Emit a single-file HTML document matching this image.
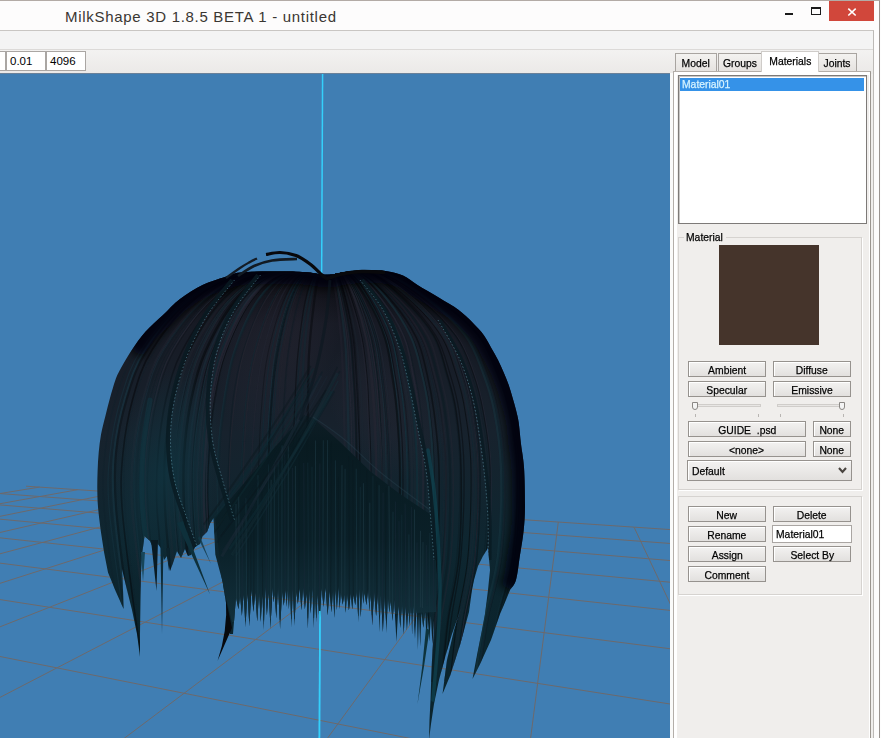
<!DOCTYPE html>
<html><head><meta charset="utf-8"><title>MilkShape 3D 1.8.5 BETA 1 - untitled</title>
<style>
html,body{margin:0;padding:0;}
body{width:881px;height:738px;overflow:hidden;background:#fdfdfd;position:relative;font-family:"Liberation Sans",sans-serif;font-size:12px;color:#000;}
.abs{position:absolute;}
#frame{left:0;top:0;width:880px;height:738px;border-top:1px solid #b3aba6;border-right:1px solid #9a9490;box-sizing:border-box;background:#fdfcfc;}
#title{left:65px;top:7px;font-size:15px;letter-spacing:0.7px;color:#3a3632;white-space:nowrap;line-height:20px;}
#close{left:829px;top:1px;width:45px;height:20px;background:#d1473b;}
#client{left:0;top:30px;width:874px;height:708px;background:#f0eeec;border-top:1px solid #c9c6c3;border-right:1px solid #bdbab7;box-sizing:border-box;}
#menubar{left:0;top:31px;width:873px;height:18px;background:#f4f4f4;border-bottom:1px solid #dcdad8;}
#toolbar{left:0;top:50px;width:873px;height:24px;background:linear-gradient(#f3f2f1,#ebe9e7);}
.tb{top:51px;height:20px;background:#fff;border:1px solid #aaa6a3;box-sizing:border-box;font-size:11.5px;line-height:18px;padding-left:3px;}
#viewport{left:0;top:74px;width:670px;height:664px;overflow:hidden;}
#vtop{left:0;top:73px;width:670px;height:1px;background:#6a8199;}
.btn{height:16px;box-sizing:border-box;border:1px solid #96928e;background:linear-gradient(#f3f2f1,#e2e0de);text-align:center;font-size:11.5px;line-height:16px;white-space:nowrap;box-shadow:inset 1px 1px 0 #fff;}
.tab{top:53px;height:18px;box-sizing:border-box;border:1px solid #a8a4a0;border-bottom:none;background:linear-gradient(#f3f2f0,#e6e3e0);text-align:center;font-size:11.5px;line-height:18px;}
.t,.tl{-webkit-text-stroke:0.25px currentColor;}
.t{display:inline-block;position:relative;top:-0.5px;transform:scaleX(.9);transform-origin:50% 50%;}
.tl{display:inline-block;transform:scaleX(.9);transform-origin:0 50%;}
.grp{border:1px solid #d6d3d0;box-sizing:border-box;box-shadow:1px 1px 0 #fff;}
</style></head><body>
<div class="abs" id="frame"></div>
<div class="abs" id="title">MilkShape 3D 1.8.5 BETA 1 - untitled</div>
<div class="abs" style="left:785px;top:13px;width:8px;height:2px;background:#1a1a1a"></div>
<div class="abs" style="left:811px;top:7px;width:10px;height:8px;border:1px solid #1a1a1a;border-top-width:2px;box-sizing:border-box"></div>
<div class="abs" id="close"><svg width="45" height="20" viewBox="0 0 45 20"><path d="M19.3,7.7 L26.7,14.5 M26.7,7.7 L19.3,14.5" stroke="#fff" stroke-width="1.6" fill="none"/></svg></div>
<div class="abs" id="client"></div>
<div class="abs" id="menubar"></div>
<div class="abs" id="toolbar"></div>
<div class="abs tb" style="left:-3px;width:9px"></div>
<div class="abs tb" style="left:6px;width:40px">0.01</div>
<div class="abs tb" style="left:46px;width:40px">4096</div>
<div class="abs" id="vtop"></div>
<div class="abs" id="viewport"><svg id="vp" width="670" height="664" viewBox="0 0 670 664">
<defs>
<linearGradient id="hg" gradientUnits="userSpaceOnUse" x1="0" y1="195" x2="0" y2="560"><stop offset="0" stop-color="#09090d"/><stop offset="0.15" stop-color="#171a24"/><stop offset="0.45" stop-color="#17222d"/><stop offset="0.75" stop-color="#0e2630"/><stop offset="1" stop-color="#0b242d"/></linearGradient>
<radialGradient id="rim" gradientUnits="userSpaceOnUse" cx="310" cy="420" r="235"><stop offset="0.72" stop-color="#05070a" stop-opacity="0"/><stop offset="0.95" stop-color="#05070a" stop-opacity="0.85"/></radialGradient>
<radialGradient id="sh"><stop offset="0" stop-color="#23232e" stop-opacity="0.6"/><stop offset="1" stop-color="#2e2b3a" stop-opacity="0"/></radialGradient>
<radialGradient id="tl"><stop offset="0" stop-color="#0f3440" stop-opacity="0.8"/><stop offset="1" stop-color="#0f3440" stop-opacity="0"/></radialGradient>
<linearGradient id="bg2" gradientUnits="userSpaceOnUse" x1="0" y1="340" x2="0" y2="550"><stop offset="0" stop-color="#081a20" stop-opacity="0.55"/><stop offset="0.15" stop-color="#081a20" stop-opacity="0.95"/><stop offset="0.6" stop-color="#0a1f27"/><stop offset="1" stop-color="#12303c"/></linearGradient>
<filter id="bl" x="-20%" y="-20%" width="140%" height="140%"><feGaussianBlur stdDeviation="5"/></filter>
<clipPath id="bc"><path d="M101,458.5 C100.5,454.2 98.6,440.2 98,433 C97.4,425.8 97.4,421 97.3,415 C97.2,409 97.4,403.1 97.6,397 C97.8,390.9 98.1,384.7 98.7,378.6 C99.3,372.5 99.9,366.6 101,360.5 C102.1,354.4 103.9,348.1 105.4,342 C106.9,335.9 108.3,330 110,324 C111.7,318 113.6,311 115.4,306 C117.2,301 118.3,299 121,294 C123.7,289 127.7,282.1 131.8,276 C135.9,269.9 140.2,263.5 145.4,257.7 C150.6,251.9 157.2,246.4 163,241 C168.8,235.6 173.4,230 180,225 C186.6,220 195,214.7 202.5,211 C210,207.3 218.8,205.1 225,203 C231.2,200.9 232.5,199.4 240,198.5 C247.5,197.6 259.2,197.6 270,197.5 C280.8,197.4 296.3,197.5 305,198 C313.7,198.5 317.5,200.1 322,200.5 C326.5,200.9 328.2,200.9 332,200.5 C335.8,200.1 340,198.7 345,198 C350,197.3 355.3,196.7 362,196.5 C368.7,196.3 378.2,196.2 385,197 C391.8,197.8 397.6,199.2 403,201.5 C408.4,203.8 411.6,207.3 417.5,211 C423.4,214.7 431.8,219.3 438.7,223.5 C445.6,227.7 453.1,231.8 458.7,236 C464.3,240.2 468.3,244.3 472.5,248.5 C476.7,252.7 480.6,256.8 483.7,261 C486.8,265.2 488.6,269.3 491,273.5 C493.4,277.7 495.9,281.8 498,286 C500.1,290.2 501.9,294.3 503.7,298.5 C505.5,302.7 507.2,306.8 508.7,311 C510.2,315.2 511.3,319.3 512.5,323.5 C513.7,327.7 515,331.8 516,336 C517,340.2 517.9,342.8 518.7,348.5 C519.5,354.2 520.1,362.5 521,370 C521.9,377.5 523.3,383.3 524,393.5 C524.7,403.7 525,420.6 525,431 C525,441.4 524.5,447.7 523.7,456 C522.9,464.3 521.3,472.7 520,481 C518.7,489.3 517.7,500.2 516,506 C514.3,511.8 511,514.3 510,516 L506,526 L500,540 L491,566 L481,588 L472.5,605 L477,581 L482,556 L485,540 L488,516 L490,496 L488,474 L483,482 L478,492 L474,506 L472,516 L469,538 L460,571 L450,602 L442.5,620 L447,586 L454,556 L461,534 L459,540 L452,560 L446,580 L439,606 L434,630 L431,650 L429,666 L429.5,646 L430.5,626 L431.5,596 L432.5,576 L434,556 L434,546.3 L432.4,570.6 L430.9,542.3 L429.3,567.8 L427.8,541.3 L426.5,566.6 L425.2,537.6 L423.3,553.8 L421.4,539.1 L420.2,572.3 L419,540.3 L417.9,576.1 L416.7,532.9 L415,564.9 L413.2,530.6 L412.1,561 L411,529.5 L409.7,552 L408.4,534.9 L406.9,556.5 L405.3,530.8 L403.7,560.8 L402.1,527.7 L400.3,554.3 L398.5,530.7 L396.4,567.9 L394.3,524.1 L392.5,547.1 L390.7,526.8 L389.3,538.7 L387.9,522.6 L386.4,559.2 L384.9,518.3 L382.9,558 L380.8,520.3 L379.5,558 L378.2,516 L376.1,542.6 L374,515.9 L372.3,551.5 L370.6,520 L369.4,537.6 L368.2,514 L366.4,531.3 L364.5,518.4 L363.3,529.7 L362.1,515.6 L360.8,543.7 L359.5,513 L358.3,548.5 L357,515.4 L355.2,531.3 L353.5,519.8 L352.2,535.6 L350.8,519.1 L348.9,536.5 L347,518.8 L345.7,539 L344.4,519.9 L342.7,530.8 L340.9,518.2 L339.6,535.2 L338.3,512.6 L336.9,536.3 L335.5,513.9 L334.3,544.3 L333.1,515.6 L331.4,538.4 L329.7,516.6 L327.6,541.5 L325.5,513.2 L323.6,533.1 L321.6,514 L319.6,550.9 L317.6,519.5 L316.3,548.7 L315,519.1 L313.7,554.6 L312.4,512.8 L310.7,539.8 L309,513.9 L307.9,555 L306.7,518.6 L304.9,535.2 L303.1,513.4 L301.4,536.2 L299.7,513.8 L297.9,529.9 L296.1,516.9 L294.4,551.9 L292.8,513.6 L291.4,553.7 L290,515.6 L288.9,535.5 L287.8,515 L286.6,532.9 L285.5,514.9 L283.8,531.7 L282.1,517.3 L280.1,555.5 L278.1,513.1 L276.3,544.4 L274.6,519.3 L273.4,528.5 L272.3,512.2 L270.5,555 L268.7,517.8 L266.9,541.5 L265.2,512.6 L263.8,556 L262.4,519.2 L260.7,548.6 L259.1,518.3 L257.2,547.7 L255.4,517.5 L253.4,537.9 L251.4,515.3 L249.4,552.4 L247.4,517.9 L245.5,553.5 L243.6,519.9 L241.9,541.9 L240.1,522 L238.4,535.2 L236,523 L233,560 L230,560 L227,535 L222.6,507.7 L215.3,480.5 L213.5,444 L210,449.6 L207,458 L202.6,462 L200,470 L195,473 L191,481 L188,482 L185,475 L181,484 L177,477 L173,489 L170,497 L167,482 L164,486 L161,474 L157,469 L154,476 L150,467 L144.5,462 L142,481 L141,498.6 L140.5,526 L140,560 L140,583 L137,560 L132,536 L127,516 L122,495 L123,516 L123.6,535 L116,518 L108,498.6 L104,478Z"/></clipPath>
</defs>
<rect width="670" height="664" fill="#407eb3"/>
<g stroke="#7e6150" stroke-width="1" fill="none" opacity="0.72"><line x1="-5.0" y1="581.5" x2="672.0" y2="716.7"/><line x1="-5.0" y1="524.8" x2="672.0" y2="630.3"/><line x1="-5.0" y1="488.5" x2="672.0" y2="575.0"/><line x1="-5.0" y1="463.3" x2="672.0" y2="536.6"/><line x1="-5.0" y1="444.7" x2="672.0" y2="508.4"/><line x1="-5.0" y1="430.5" x2="672.0" y2="486.7"/><line x1="-5.0" y1="419.2" x2="672.0" y2="469.6"/><line x1="26.0" y1="412.2" x2="672.0" y2="455.7"/><line x1="634.0" y1="453.1" x2="749.6" y2="697.8"/><line x1="558.3" y1="448.0" x2="526.3" y2="697.8"/><line x1="488.5" y1="443.3" x2="303.0" y2="697.8"/><line x1="423.8" y1="439.0" x2="79.7" y2="697.8"/><line x1="363.7" y1="434.9" x2="-143.6" y2="697.8"/><line x1="307.8" y1="431.2" x2="-366.9" y2="697.8"/><line x1="255.6" y1="427.7" x2="-590.2" y2="697.8"/><line x1="206.8" y1="424.4" x2="-813.5" y2="697.8"/><line x1="161.1" y1="421.3" x2="-1036.8" y2="697.8"/><line x1="118.1" y1="418.4" x2="-1260.1" y2="697.8"/><line x1="77.7" y1="415.7" x2="-1483.4" y2="697.8"/><line x1="39.5" y1="413.1" x2="-1706.7" y2="697.8"/></g>
<line x1="322.6" y1="0" x2="319.4" y2="664" stroke="#34d0fb" stroke-width="1.5"/>
<path d="M101,458.5 C100.5,454.2 98.6,440.2 98,433 C97.4,425.8 97.4,421 97.3,415 C97.2,409 97.4,403.1 97.6,397 C97.8,390.9 98.1,384.7 98.7,378.6 C99.3,372.5 99.9,366.6 101,360.5 C102.1,354.4 103.9,348.1 105.4,342 C106.9,335.9 108.3,330 110,324 C111.7,318 113.6,311 115.4,306 C117.2,301 118.3,299 121,294 C123.7,289 127.7,282.1 131.8,276 C135.9,269.9 140.2,263.5 145.4,257.7 C150.6,251.9 157.2,246.4 163,241 C168.8,235.6 173.4,230 180,225 C186.6,220 195,214.7 202.5,211 C210,207.3 218.8,205.1 225,203 C231.2,200.9 232.5,199.4 240,198.5 C247.5,197.6 259.2,197.6 270,197.5 C280.8,197.4 296.3,197.5 305,198 C313.7,198.5 317.5,200.1 322,200.5 C326.5,200.9 328.2,200.9 332,200.5 C335.8,200.1 340,198.7 345,198 C350,197.3 355.3,196.7 362,196.5 C368.7,196.3 378.2,196.2 385,197 C391.8,197.8 397.6,199.2 403,201.5 C408.4,203.8 411.6,207.3 417.5,211 C423.4,214.7 431.8,219.3 438.7,223.5 C445.6,227.7 453.1,231.8 458.7,236 C464.3,240.2 468.3,244.3 472.5,248.5 C476.7,252.7 480.6,256.8 483.7,261 C486.8,265.2 488.6,269.3 491,273.5 C493.4,277.7 495.9,281.8 498,286 C500.1,290.2 501.9,294.3 503.7,298.5 C505.5,302.7 507.2,306.8 508.7,311 C510.2,315.2 511.3,319.3 512.5,323.5 C513.7,327.7 515,331.8 516,336 C517,340.2 517.9,342.8 518.7,348.5 C519.5,354.2 520.1,362.5 521,370 C521.9,377.5 523.3,383.3 524,393.5 C524.7,403.7 525,420.6 525,431 C525,441.4 524.5,447.7 523.7,456 C522.9,464.3 521.3,472.7 520,481 C518.7,489.3 517.7,500.2 516,506 C514.3,511.8 511,514.3 510,516 L506,526 L500,540 L491,566 L481,588 L472.5,605 L477,581 L482,556 L485,540 L488,516 L490,496 L488,474 L483,482 L478,492 L474,506 L472,516 L469,538 L460,571 L450,602 L442.5,620 L447,586 L454,556 L461,534 L459,540 L452,560 L446,580 L439,606 L434,630 L431,650 L429,666 L429.5,646 L430.5,626 L431.5,596 L432.5,576 L434,556 L434,546.3 L432.4,570.6 L430.9,542.3 L429.3,567.8 L427.8,541.3 L426.5,566.6 L425.2,537.6 L423.3,553.8 L421.4,539.1 L420.2,572.3 L419,540.3 L417.9,576.1 L416.7,532.9 L415,564.9 L413.2,530.6 L412.1,561 L411,529.5 L409.7,552 L408.4,534.9 L406.9,556.5 L405.3,530.8 L403.7,560.8 L402.1,527.7 L400.3,554.3 L398.5,530.7 L396.4,567.9 L394.3,524.1 L392.5,547.1 L390.7,526.8 L389.3,538.7 L387.9,522.6 L386.4,559.2 L384.9,518.3 L382.9,558 L380.8,520.3 L379.5,558 L378.2,516 L376.1,542.6 L374,515.9 L372.3,551.5 L370.6,520 L369.4,537.6 L368.2,514 L366.4,531.3 L364.5,518.4 L363.3,529.7 L362.1,515.6 L360.8,543.7 L359.5,513 L358.3,548.5 L357,515.4 L355.2,531.3 L353.5,519.8 L352.2,535.6 L350.8,519.1 L348.9,536.5 L347,518.8 L345.7,539 L344.4,519.9 L342.7,530.8 L340.9,518.2 L339.6,535.2 L338.3,512.6 L336.9,536.3 L335.5,513.9 L334.3,544.3 L333.1,515.6 L331.4,538.4 L329.7,516.6 L327.6,541.5 L325.5,513.2 L323.6,533.1 L321.6,514 L319.6,550.9 L317.6,519.5 L316.3,548.7 L315,519.1 L313.7,554.6 L312.4,512.8 L310.7,539.8 L309,513.9 L307.9,555 L306.7,518.6 L304.9,535.2 L303.1,513.4 L301.4,536.2 L299.7,513.8 L297.9,529.9 L296.1,516.9 L294.4,551.9 L292.8,513.6 L291.4,553.7 L290,515.6 L288.9,535.5 L287.8,515 L286.6,532.9 L285.5,514.9 L283.8,531.7 L282.1,517.3 L280.1,555.5 L278.1,513.1 L276.3,544.4 L274.6,519.3 L273.4,528.5 L272.3,512.2 L270.5,555 L268.7,517.8 L266.9,541.5 L265.2,512.6 L263.8,556 L262.4,519.2 L260.7,548.6 L259.1,518.3 L257.2,547.7 L255.4,517.5 L253.4,537.9 L251.4,515.3 L249.4,552.4 L247.4,517.9 L245.5,553.5 L243.6,519.9 L241.9,541.9 L240.1,522 L238.4,535.2 L236,523 L233,560 L230,560 L227,535 L222.6,507.7 L215.3,480.5 L213.5,444 L210,449.6 L207,458 L202.6,462 L200,470 L195,473 L191,481 L188,482 L185,475 L181,484 L177,477 L173,489 L170,497 L167,482 L164,486 L161,474 L157,469 L154,476 L150,467 L144.5,462 L142,481 L141,498.6 L140.5,526 L140,560 L140,583 L137,560 L132,536 L127,516 L122,495 L123,516 L123.6,535 L116,518 L108,498.6 L104,478Z" fill="url(#hg)"/>
<g clip-path="url(#bc)">
<ellipse cx="280" cy="275" rx="55" ry="95" fill="url(#sh)" transform="rotate(20 280 275)"/>
<ellipse cx="385" cy="335" rx="50" ry="75" fill="url(#sh)" transform="rotate(-35 385 335)" opacity="0.8"/>
<g fill="none"><path d="M327,202 C326.2,201.8 336.2,201.5 322,201 C307.8,200.5 265,195 242,199 C219,203 201.5,212.2 184,225 C166.5,237.8 148.3,259.5 137,276 C125.7,292.5 121.3,306.8 116,324 C110.7,341.2 107,360.8 105,379 C103,397.2 102.2,408.5 104,433 C105.8,457.5 112.5,500.5 116,526 C119.5,551.5 123.5,576 125,586" stroke="#10222c" stroke-width="1.2" opacity="0.39"/><path d="M327,203 C326.3,202.8 333.8,202.5 323,202 C312.2,201.5 279.5,196 262,200 C244.5,204 231.3,213.2 218,226 C204.7,238.8 190.7,260.5 182,277 C173.3,293.5 170,307.8 166,325 C162,342.2 159.5,361.8 158,380 C156.5,398.2 155.7,409.5 157,434 C158.3,458.5 163.2,501.5 166,527 C168.8,552.5 172.7,577 174,587" stroke="#06080b" stroke-width="1.6" opacity="0.41"/><path d="M327,204 C326.5,203.7 332.2,202.7 324,202 C315.8,201.3 291.3,195.8 278,200 C264.7,204.2 254.3,214 244,227 C233.7,240 222.7,261.5 216,278 C209.3,294.5 207,309 204,326 C201,343 199.2,361.8 198,380 C196.8,398.2 196,410.3 197,435 C198,459.7 201.8,502.5 204,528 C206.2,553.5 209,578 210,588" stroke="#173642" stroke-width="2.2" opacity="0.26"/><path d="M327,204 C326.5,203.7 333,202.7 324,202 C315,201.3 287.7,195.8 273,200 C258.3,204.2 247.2,214 236,227 C224.8,240 213.3,261.5 206,278 C198.7,294.5 195.5,309 192,326 C188.5,343 186.2,361.8 185,380 C183.8,398.2 183.8,410.3 185,435 C186.2,459.7 189.8,502.5 192,528 C194.2,553.5 197,578 198,588" stroke="#06080b" stroke-width="0.8" opacity="0.33"/><path d="M327,203 C326.3,202.8 333.3,202.5 323,202 C312.7,201.5 281.7,196 265,200 C248.3,204 235.7,213.2 223,226 C210.3,238.8 197.3,260.5 189,277 C180.7,293.5 177,307.8 173,325 C169,342.2 166.3,361.8 165,380 C163.7,398.2 163.7,409.5 165,434 C166.3,458.5 170.5,501.5 173,527 C175.5,552.5 178.8,577 180,587" stroke="#06080b" stroke-width="2.2" opacity="0.48"/><path d="M327,204 C326.5,203.7 331.5,202.7 324,202 C316.5,201.3 294.2,195.8 282,200 C269.8,204.2 260.3,214 251,227 C241.7,240 232,261.5 226,278 C220,294.5 217.8,308.8 215,326 C212.2,343.2 210.2,362.8 209,381 C207.8,399.2 207,410.5 208,435 C209,459.5 213,502.5 215,528 C217,553.5 219.2,578 220,588" stroke="#070a0e" stroke-width="1.2" opacity="0.36"/><path d="M327,203 C326.5,202.8 334,202.5 324,202 C314,201.5 283.3,196 267,200 C250.7,204 238.5,213.2 226,226 C213.5,238.8 200.2,260.5 192,277 C183.8,293.5 180.8,307.8 177,325 C173.2,342.2 170.3,361.8 169,380 C167.7,398.2 167.7,409.5 169,434 C170.3,458.5 174.5,501.5 177,527 C179.5,552.5 182.8,577 184,587" stroke="#262632" stroke-width="2.2" opacity="0.31"/><path d="M327,202 C326.3,201.8 336,201.5 323,201 C310,200.5 270.3,195 249,199 C227.7,203 211.2,212.2 195,225 C178.8,237.8 162.3,259.5 152,276 C141.7,292.5 137.8,306.8 133,324 C128.2,341.2 124.8,360.8 123,379 C121.2,397.2 120.3,408.5 122,433 C123.7,457.5 129.7,500.5 133,526 C136.3,551.5 140.5,576 142,586" stroke="#06080b" stroke-width="1.6" opacity="0.56"/><path d="M327,205 C326.7,204.7 330.5,203.7 325,203 C319.5,202.3 302.8,196.8 294,201 C285.2,205.2 278.7,215 272,228 C265.3,241 258.3,262.5 254,279 C249.7,295.5 248,310 246,327 C244,344 242.8,362.8 242,381 C241.2,399.2 240.3,411.3 241,436 C241.7,460.7 244.5,503.5 246,529 C247.5,554.5 249.3,579 250,589" stroke="#0e2c37" stroke-width="1" opacity="0.47"/><path d="M327,203 C326.3,202.7 334.7,201.7 323,201 C311.3,200.3 276,194.8 257,199 C238,203.2 223.5,213 209,226 C194.5,239 179.3,260.5 170,277 C160.7,293.5 157.3,308 153,325 C148.7,342 145.7,360.8 144,379 C142.3,397.2 141.5,409.3 143,434 C144.5,458.7 150,501.5 153,527 C156,552.5 159.7,577 161,587" stroke="#262632" stroke-width="1" opacity="0.38"/><path d="M327,204 C326.5,203.7 332.8,202.7 324,202 C315.2,201.3 288.3,195.8 274,200 C259.7,204.2 248.8,214 238,227 C227.2,240 216,261.5 209,278 C202,294.5 199.3,309 196,326 C192.7,343 190.2,361.8 189,380 C187.8,398.2 187.8,410.3 189,435 C190.2,459.7 193.8,502.5 196,528 C198.2,553.5 201,578 202,588" stroke="#2b2a39" stroke-width="1" opacity="0.30"/><path d="M327,204 C326.5,203.7 331.7,202.7 324,202 C316.3,201.3 293.3,195.8 281,200 C268.7,204.2 259.5,214 250,227 C240.5,240 230.2,261.5 224,278 C217.8,294.5 215.8,309 213,326 C210.2,343 208.2,361.8 207,380 C205.8,398.2 205,410.3 206,435 C207,459.7 211,502.5 213,528 C215,553.5 217.2,578 218,588" stroke="#070a0e" stroke-width="0.8" opacity="0.58"/><path d="M327,205 C326.7,204.7 329.8,203.7 325,203 C320.2,202.3 305.7,196.8 298,201 C290.3,205.2 284.8,215 279,228 C273.2,241 266.8,262.5 263,279 C259.2,295.5 257.8,310 256,327 C254.2,344 252.7,362.8 252,381 C251.3,399.2 251.3,411.3 252,436 C252.7,460.7 254.8,503.5 256,529 C257.2,554.5 258.5,579 259,589" stroke="#1c2833" stroke-width="0.8" opacity="0.41"/><path d="M327,205 C326.7,204.7 329.8,203.7 325,203 C320.2,202.3 305.7,196.8 298,201 C290.3,205.2 284.8,215 279,228 C273.2,241 266.8,262.5 263,279 C259.2,295.5 257.8,310 256,327 C254.2,344 252.7,362.8 252,381 C251.3,399.2 251.3,411.3 252,436 C252.7,460.7 254.8,503.5 256,529 C257.2,554.5 258.5,579 259,589" stroke="#262632" stroke-width="1.6" opacity="0.38"/><path d="M327,204 C326.5,203.7 332,202.7 324,202 C316,201.3 292,195.8 279,200 C266,204.2 255.8,214 246,227 C236.2,240 226.3,261.5 220,278 C213.7,294.5 211,309 208,326 C205,343 203,361.8 202,380 C201,398.2 201,410.3 202,435 C203,459.7 206,502.5 208,528 C210,553.5 213,578 214,588" stroke="#2b2a39" stroke-width="2.2" opacity="0.41"/><path d="M327,205 C326.8,204.8 328.2,204.5 326,204 C323.8,203.5 317.5,198 314,202 C310.5,206 307.7,215.2 305,228 C302.3,240.8 299.7,262.5 298,279 C296.3,295.5 295.8,309.8 295,327 C294.2,344.2 293.3,363.8 293,382 C292.7,400.2 292.7,411.5 293,436 C293.3,460.5 294.3,503.5 295,529 C295.7,554.5 296.7,579 297,589" stroke="#070a0e" stroke-width="1.2" opacity="0.56"/><path d="M327,206 C326.8,205.7 327.7,204.7 326,204 C324.3,203.3 319.7,197.8 317,202 C314.3,206.2 312.2,216 310,229 C307.8,242 305.3,263.5 304,280 C302.7,296.5 302.7,311 302,328 C301.3,345 300.3,363.8 300,382 C299.7,400.2 299.7,412.3 300,437 C300.3,461.7 301.5,504.5 302,530 C302.5,555.5 302.8,580 303,590" stroke="#0e2c37" stroke-width="2.2" opacity="0.37"/><path d="M327,203 C326.5,202.8 333.7,202.5 324,202 C314.3,201.5 284.8,196 269,200 C253.2,204 241,213.2 229,226 C217,238.8 204.7,260.5 197,277 C189.3,293.5 186.7,307.8 183,325 C179.3,342.2 176.3,361.8 175,380 C173.7,398.2 173.7,409.5 175,434 C176.3,458.5 180.7,501.5 183,527 C185.3,552.5 188,577 189,587" stroke="#070a0e" stroke-width="1" opacity="0.39"/><path d="M327,205 C326.8,204.7 329.7,203.7 326,203 C322.3,202.3 311,196.8 305,201 C299,205.2 294.5,215 290,228 C285.5,241 280.8,262.5 278,279 C275.2,295.5 274.3,309.8 273,327 C271.7,344.2 270.5,363.8 270,382 C269.5,400.2 269.5,411.5 270,436 C270.5,460.5 272.2,503.5 273,529 C273.8,554.5 274.7,579 275,589" stroke="#0e2c37" stroke-width="1" opacity="0.52"/><path d="M327,203 C326.3,202.7 334.5,201.7 323,201 C311.5,200.3 276.8,194.8 258,199 C239.2,203.2 224.5,213 210,226 C195.5,239 180.3,260.5 171,277 C161.7,293.5 158.3,308 154,325 C149.7,342 146.7,360.8 145,379 C143.3,397.2 142.5,409.3 144,434 C145.5,458.7 151,501.5 154,527 C157,552.5 160.7,577 162,587" stroke="#0b1a22" stroke-width="1.6" opacity="0.29"/><path d="M327,204 C326.5,203.7 332.2,202.7 324,202 C315.8,201.3 291.3,195.8 278,200 C264.7,204.2 254.2,214 244,227 C233.8,240 223.5,261.5 217,278 C210.5,294.5 208,309 205,326 C202,343 200.2,361.8 199,380 C197.8,398.2 197,410.3 198,435 C199,459.7 202.8,502.5 205,528 C207.2,553.5 210,578 211,588" stroke="#2b2a39" stroke-width="0.8" opacity="0.49"/><path d="M327,205 C326.8,204.7 329.8,203.7 326,203 C322.2,202.3 310.2,196.8 304,201 C297.8,205.2 293.7,215 289,228 C284.3,241 279,262.5 276,279 C273,295.5 272.3,309.8 271,327 C269.7,344.2 268.5,363.8 268,382 C267.5,400.2 267.5,411.5 268,436 C268.5,460.5 270.2,503.5 271,529 C271.8,554.5 272.7,579 273,589" stroke="#06080b" stroke-width="1.2" opacity="0.31"/><path d="M327,206 C327,205.7 328.3,204.7 327,204 C325.7,203.3 321.2,197.8 319,202 C316.8,206.2 315.7,216 314,229 C312.3,242 310,263.5 309,280 C308,296.5 308.3,311 308,328 C307.7,345 307.3,363.8 307,382 C306.7,400.2 305.8,412.3 306,437 C306.2,461.7 307.7,504.5 308,530 C308.3,555.5 308,580 308,590" stroke="#06080b" stroke-width="2.2" opacity="0.50"/><path d="M327,205 C326.8,204.8 329.5,204.5 326,204 C322.5,203.5 311.7,198 306,202 C300.3,206 296.3,215.2 292,228 C287.7,240.8 282.8,262.5 280,279 C277.2,295.5 276.3,309.8 275,327 C273.7,344.2 272.5,363.8 272,382 C271.5,400.2 271.5,411.5 272,436 C272.5,460.5 274.2,503.5 275,529 C275.8,554.5 276.7,579 277,589" stroke="#0e2c37" stroke-width="1.2" opacity="0.44"/><path d="M327,202 C326.2,201.8 335.5,201.5 322,201 C308.5,200.5 268,195 246,199 C224,203 206.8,212.2 190,225 C173.2,237.8 155.8,259.5 145,276 C134.2,292.5 130.2,306.8 125,324 C119.8,341.2 115.8,360.8 114,379 C112.2,397.2 112.2,408.5 114,433 C115.8,457.5 121.7,500.5 125,526 C128.3,551.5 132.5,576 134,586" stroke="#173642" stroke-width="2.2" opacity="0.60"/><path d="M327,205 C326.8,204.8 329.2,204.5 326,204 C322.8,203.5 313.3,198 308,202 C302.7,206 298.2,215.2 294,228 C289.8,240.8 285.5,262.5 283,279 C280.5,295.5 280.2,309.8 279,327 C277.8,344.2 276.5,363.8 276,382 C275.5,400.2 275.5,411.5 276,436 C276.5,460.5 278.2,503.5 279,529 C279.8,554.5 280.7,579 281,589" stroke="#262632" stroke-width="0.8" opacity="0.39"/><path d="M327,202 C326.3,201.8 335.8,201.5 323,201 C310.2,200.5 271,195 250,199 C229,203 212.8,212.2 197,225 C181.2,237.8 165.3,259.5 155,276 C144.7,292.5 140,306.8 135,324 C130,341.2 126.7,360.8 125,379 C123.3,397.2 123.3,408.5 125,433 C126.7,457.5 131.8,500.5 135,526 C138.2,551.5 142.5,576 144,586" stroke="#10222c" stroke-width="1" opacity="0.41"/><path d="M327,205 C326.8,204.7 329.7,203.7 326,203 C322.3,202.3 311.2,196.8 305,201 C298.8,205.2 293.7,215 289,228 C284.3,241 280,262.5 277,279 C274,295.5 272.5,309.8 271,327 C269.5,344.2 268.5,363.8 268,382 C267.5,400.2 267.5,411.5 268,436 C268.5,460.5 270,503.5 271,529 C272,554.5 273.5,579 274,589" stroke="#070a0e" stroke-width="1.6" opacity="0.44"/><path d="M327,203 C326.5,202.8 333.7,202.5 324,202 C314.3,201.5 284.8,196 269,200 C253.2,204 241,213.2 229,226 C217,238.8 204.8,260.5 197,277 C189.2,293.5 185.7,307.8 182,325 C178.3,342.2 176.3,361.8 175,380 C173.7,398.2 172.8,409.5 174,434 C175.2,458.5 179.5,501.5 182,527 C184.5,552.5 187.8,577 189,587" stroke="#173642" stroke-width="1.2" opacity="0.41"/><path d="M327,203 C326.5,202.8 333.7,202.5 324,202 C314.3,201.5 284.8,196 269,200 C253.2,204 241,213.2 229,226 C217,238.8 204.8,260.5 197,277 C189.2,293.5 185.7,307.8 182,325 C178.3,342.2 176.3,361.8 175,380 C173.7,398.2 172.8,409.5 174,434 C175.2,458.5 179.5,501.5 182,527 C184.5,552.5 187.8,577 189,587" stroke="#262632" stroke-width="0.8" opacity="0.50"/><path d="M327,203 C326.3,202.7 334.8,201.7 323,201 C311.2,200.3 275.3,194.8 256,199 C236.7,203.2 221.7,213 207,226 C192.3,239 177.5,260.5 168,277 C158.5,293.5 154.5,308 150,325 C145.5,342 142.7,360.8 141,379 C139.3,397.2 138.5,409.3 140,434 C141.5,458.7 147,501.5 150,527 C153,552.5 156.7,577 158,587" stroke="#0b1a22" stroke-width="1" opacity="0.33"/><path d="M327,204 C326.7,203.8 331.3,203.5 325,203 C318.7,202.5 299.2,197 289,201 C278.8,205 271.7,214.2 264,227 C256.3,239.8 248.2,261.5 243,278 C237.8,294.5 235.3,308.8 233,326 C230.7,343.2 229.8,362.8 229,381 C228.2,399.2 227.3,410.5 228,435 C228.7,459.5 231.3,502.5 233,528 C234.7,553.5 237.2,578 238,588" stroke="#0b1a22" stroke-width="1.2" opacity="0.44"/><path d="M327,203 C326.3,202.7 334.5,201.7 323,201 C311.5,200.3 276.7,194.8 258,199 C239.3,203.2 225.3,213 211,226 C196.7,239 181.3,260.5 172,277 C162.7,293.5 159.3,308 155,325 C150.7,342 147.5,360.8 146,379 C144.5,397.2 144.5,409.3 146,434 C147.5,458.7 152.2,501.5 155,527 C157.8,552.5 161.7,577 163,587" stroke="#2b2a39" stroke-width="1.2" opacity="0.57"/><path d="M327,203 C326.3,202.7 335.3,201.7 323,201 C310.7,200.3 273.2,194.8 253,199 C232.8,203.2 217.3,213 202,226 C186.7,239 170.8,260.5 161,277 C151.2,293.5 147.7,308 143,325 C138.3,342 134.8,360.8 133,379 C131.2,397.2 130.3,409.3 132,434 C133.7,458.7 139.8,501.5 143,527 C146.2,552.5 149.7,577 151,587" stroke="#2b2a39" stroke-width="2.2" opacity="0.28"/><path d="M327,204 C326.7,203.8 331.8,203.5 325,203 C318.2,202.5 297.3,197 286,201 C274.7,205 265.7,214.2 257,227 C248.3,239.8 239.5,261.5 234,278 C228.5,294.5 226.7,308.8 224,326 C221.3,343.2 219,362.8 218,381 C217,399.2 217,410.5 218,435 C219,459.5 222.3,502.5 224,528 C225.7,553.5 227.3,578 228,588" stroke="#173642" stroke-width="1.6" opacity="0.52"/><path d="M327,204 C326.5,203.7 331.5,202.7 324,202 C316.5,201.3 294.2,195.8 282,200 C269.8,204.2 260.3,214 251,227 C241.7,240 232.2,261.5 226,278 C219.8,294.5 216.8,308.8 214,326 C211.2,343.2 210,362.8 209,381 C208,399.2 207.2,410.5 208,435 C208.8,459.5 212,502.5 214,528 C216,553.5 219,578 220,588" stroke="#070a0e" stroke-width="1" opacity="0.53"/><path d="M327,205 C326.8,204.8 328,204.5 326,204 C324,203.5 318.2,198 315,202 C311.8,206 309.5,215.2 307,228 C304.5,240.8 301.7,262.5 300,279 C298.3,295.5 297.7,309.8 297,327 C296.3,344.2 296.3,363.8 296,382 C295.7,400.2 294.8,411.5 295,436 C295.2,460.5 296.3,503.5 297,529 C297.7,554.5 298.7,579 299,589" stroke="#070a0e" stroke-width="1" opacity="0.44"/><path d="M327,203 C326.5,202.8 334.2,202.5 324,202 C313.8,201.5 282.7,196 266,200 C249.3,204 236.5,213.2 224,226 C211.5,238.8 199,260.5 191,277 C183,293.5 179.8,307.8 176,325 C172.2,342.2 169.5,361.8 168,380 C166.5,398.2 165.7,409.5 167,434 C168.3,458.5 173.3,501.5 176,527 C178.7,552.5 181.8,577 183,587" stroke="#1c2833" stroke-width="1.6" opacity="0.30"/><path d="M327,204 C326.5,203.7 331.8,202.7 324,202 C316.2,201.3 292.8,195.8 280,200 C267.2,204.2 256.8,214 247,227 C237.2,240 227.3,261.5 221,278 C214.7,294.5 212,309 209,326 C206,343 204.2,361.8 203,380 C201.8,398.2 201,410.3 202,435 C203,459.7 207,502.5 209,528 C211,553.5 213.2,578 214,588" stroke="#173642" stroke-width="1.6" opacity="0.58"/><path d="M327,204 C326.5,203.7 331.7,202.7 324,202 C316.3,201.3 293.3,195.8 281,200 C268.7,204.2 259.3,214 250,227 C240.7,240 231.2,261.5 225,278 C218.8,294.5 215.8,308.8 213,326 C210.2,343.2 209,362.8 208,381 C207,399.2 206.2,410.5 207,435 C207.8,459.5 211,502.5 213,528 C215,553.5 218,578 219,588" stroke="#0b1a22" stroke-width="1" opacity="0.40"/><path d="M327,204 C326.5,203.7 332.5,202.7 324,202 C315.5,201.3 289.8,195.8 276,200 C262.2,204.2 251.5,214 241,227 C230.5,240 219.7,261.5 213,278 C206.3,294.5 204.2,309 201,326 C197.8,343 195.2,361.8 194,380 C192.8,398.2 192.8,410.3 194,435 C195.2,459.7 199,502.5 201,528 C203,553.5 205.2,578 206,588" stroke="#173642" stroke-width="1" opacity="0.43"/><path d="M327,203 C326.3,202.7 335.2,201.7 323,201 C310.8,200.3 273.8,194.8 254,199 C234.2,203.2 219.2,213 204,226 C188.8,239 172.8,260.5 163,277 C153.2,293.5 149.7,308 145,325 C140.3,342 136.7,360.8 135,379 C133.3,397.2 133.3,409.3 135,434 C136.7,458.7 142,501.5 145,527 C148,552.5 151.7,577 153,587" stroke="#173642" stroke-width="1.2" opacity="0.36"/><path d="M327,204 C326.7,203.8 331.2,203.5 325,203 C318.8,202.5 300,197 290,201 C280,205 272.7,214.2 265,227 C257.3,239.8 249,261.5 244,278 C239,294.5 237.3,308.8 235,326 C232.7,343.2 230.8,362.8 230,381 C229.2,399.2 229.2,410.5 230,435 C230.8,459.5 233.5,502.5 235,528 C236.5,553.5 238.3,578 239,588" stroke="#262632" stroke-width="1.2" opacity="0.55"/><path d="M327,202 C326.2,201.8 335.8,201.5 322,201 C308.2,200.5 266.5,195 244,199 C221.5,203 204.2,212.2 187,225 C169.8,237.8 152,259.5 141,276 C130,292.5 126.2,306.8 121,324 C115.8,341.2 112,360.8 110,379 C108,397.2 107.2,408.5 109,433 C110.8,457.5 117.5,500.5 121,526 C124.5,551.5 128.5,576 130,586" stroke="#173642" stroke-width="1.2" opacity="0.45"/><path d="M327,205 C326.8,204.7 329.8,203.7 326,203 C322.2,202.3 310.2,196.8 304,201 C297.8,205.2 293.7,215 289,228 C284.3,241 279.2,262.5 276,279 C272.8,295.5 271.5,309.8 270,327 C268.5,344.2 267.5,363.8 267,382 C266.5,400.2 266.5,411.5 267,436 C267.5,460.5 269,503.5 270,529 C271,554.5 272.5,579 273,589" stroke="#173642" stroke-width="0.8" opacity="0.43"/><path d="M327,204 C326.5,203.7 333,202.7 324,202 C315,201.3 287.8,195.8 273,200 C258.2,204.2 246.3,214 235,227 C223.7,240 212.3,261.5 205,278 C197.7,294.5 194.5,309 191,326 C187.5,343 185.2,361.8 184,380 C182.8,398.2 182.8,410.3 184,435 C185.2,459.7 188.7,502.5 191,528 C193.3,553.5 196.8,578 198,588" stroke="#070a0e" stroke-width="2.2" opacity="0.59"/><path d="M327,204 C326.5,203.7 331.8,202.7 324,202 C316.2,201.3 292.8,195.8 280,200 C267.2,204.2 256.8,214 247,227 C237.2,240 227.3,261.5 221,278 C214.7,294.5 212,309 209,326 C206,343 204.2,361.8 203,380 C201.8,398.2 201,410.3 202,435 C203,459.7 207,502.5 209,528 C211,553.5 213.2,578 214,588" stroke="#10222c" stroke-width="2.2" opacity="0.53"/><path d="M327,204 C326.5,203.7 332.5,202.7 324,202 C315.5,201.3 289.8,195.8 276,200 C262.2,204.2 251.7,214 241,227 C230.3,240 218.8,261.5 212,278 C205.2,294.5 203.2,309 200,326 C196.8,343 194.2,361.8 193,380 C191.8,398.2 191.8,410.3 193,435 C194.2,459.7 197.8,502.5 200,528 C202.2,553.5 205,578 206,588" stroke="#06080b" stroke-width="0.8" opacity="0.49"/><path d="M327,205 C326.8,204.8 328,204.5 326,204 C324,203.5 318.2,198 315,202 C311.8,206 309.5,215.2 307,228 C304.5,240.8 301.7,262.5 300,279 C298.3,295.5 297.8,309.8 297,327 C296.2,344.2 295.3,363.8 295,382 C294.7,400.2 294.7,411.5 295,436 C295.3,460.5 296.5,503.5 297,529 C297.5,554.5 297.8,579 298,589" stroke="#173642" stroke-width="1.6" opacity="0.39"/><path d="M327,202 C326.2,201.8 335.7,201.5 322,201 C308.3,200.5 267.2,195 245,199 C222.8,203 206,212.2 189,225 C172,237.8 154,259.5 143,276 C132,292.5 128.2,306.8 123,324 C117.8,341.2 114,360.8 112,379 C110,397.2 109.2,408.5 111,433 C112.8,457.5 119.5,500.5 123,526 C126.5,551.5 130.5,576 132,586" stroke="#10222c" stroke-width="1.2" opacity="0.34"/><path d="M327,204 C326.5,203.7 331.7,202.7 324,202 C316.3,201.3 293.3,195.8 281,200 C268.7,204.2 259.3,214 250,227 C240.7,240 231.2,261.5 225,278 C218.8,294.5 216,308.8 213,326 C210,343.2 208,362.8 207,381 C206,399.2 206,410.5 207,435 C208,459.5 211,502.5 213,528 C215,553.5 218,578 219,588" stroke="#2b2a39" stroke-width="1.6" opacity="0.57"/><path d="M327,202 C326.2,201.8 335.3,201.5 322,201 C308.7,200.5 268.8,195 247,199 C225.2,203 207.7,212.2 191,225 C174.3,237.8 157.7,259.5 147,276 C136.3,292.5 132.2,306.8 127,324 C121.8,341.2 117.8,360.8 116,379 C114.2,397.2 114.2,408.5 116,433 C117.8,457.5 123.7,500.5 127,526 C130.3,551.5 134.5,576 136,586" stroke="#06080b" stroke-width="2.2" opacity="0.36"/><path d="M327,205 C326.8,204.7 329.7,203.7 326,203 C322.3,202.3 311,196.8 305,201 C299,205.2 294.5,215 290,228 C285.5,241 281,262.5 278,279 C275,295.5 273.5,309.8 272,327 C270.5,344.2 269.5,363.8 269,382 C268.5,400.2 268.5,411.5 269,436 C269.5,460.5 271,503.5 272,529 C273,554.5 274.5,579 275,589" stroke="#070a0e" stroke-width="1.2" opacity="0.30"/><path d="M327,203 C326.3,202.7 334.3,201.7 323,201 C311.7,200.3 277.5,194.8 259,199 C240.5,203.2 226.2,213 212,226 C197.8,239 183.2,260.5 174,277 C164.8,293.5 161.2,308 157,325 C152.8,342 150.5,360.8 149,379 C147.5,397.2 146.7,409.3 148,434 C149.3,458.7 154.2,501.5 157,527 C159.8,552.5 163.7,577 165,587" stroke="#070a0e" stroke-width="0.8" opacity="0.32"/><path d="M327,205 C326.8,204.7 330.2,203.7 326,203 C321.8,202.3 308.8,196.8 302,201 C295.2,205.2 290.2,215 285,228 C279.8,241 274.3,262.5 271,279 C267.7,295.5 266.5,310 265,327 C263.5,344 262.5,362.8 262,381 C261.5,399.2 261.5,411.3 262,436 C262.5,460.7 264,503.5 265,529 C266,554.5 267.5,579 268,589" stroke="#0e2c37" stroke-width="1.2" opacity="0.50"/><path d="M327,205 C326.7,204.7 329.3,203.7 325,203 C320.7,202.3 308,196.8 301,201 C294,205.2 288.5,215 283,228 C277.5,241 271.5,262.5 268,279 C264.5,295.5 263.5,310 262,327 C260.5,344 259.7,362.8 259,381 C258.3,399.2 257.5,411.3 258,436 C258.5,460.7 260.8,503.5 262,529 C263.2,554.5 264.5,579 265,589" stroke="#06080b" stroke-width="0.8" opacity="0.42"/><path d="M327,204 C326.5,203.7 332.8,202.7 324,202 C315.2,201.3 288.3,195.8 274,200 C259.7,204.2 248.8,214 238,227 C227.2,240 216,261.5 209,278 C202,294.5 199.3,309 196,326 C192.7,343 190.2,361.8 189,380 C187.8,398.2 187.8,410.3 189,435 C190.2,459.7 193.8,502.5 196,528 C198.2,553.5 201,578 202,588" stroke="#173642" stroke-width="2.2" opacity="0.34"/><path d="M327,205 C326.8,204.7 329.7,203.7 326,203 C322.3,202.3 311.2,196.8 305,201 C298.8,205.2 293.7,215 289,228 C284.3,241 280,262.5 277,279 C274,295.5 272.5,309.8 271,327 C269.5,344.2 268.5,363.8 268,382 C267.5,400.2 267.5,411.5 268,436 C268.5,460.5 270,503.5 271,529 C272,554.5 273.5,579 274,589" stroke="#173642" stroke-width="1.6" opacity="0.26"/><path d="M327,203 C326.5,202.8 333.5,202.5 324,202 C314.5,201.5 285.5,196 270,200 C254.5,204 242.7,213.2 231,226 C219.3,238.8 207.5,260.5 200,277 C192.5,293.5 189.5,307.8 186,325 C182.5,342.2 180.3,361.8 179,380 C177.7,398.2 176.8,409.5 178,434 C179.2,458.5 183.5,501.5 186,527 C188.5,552.5 191.8,577 193,587" stroke="#173642" stroke-width="2.2" opacity="0.31"/><path d="M327,205 C326.8,204.7 329.8,203.7 326,203 C322.2,202.3 310.3,196.8 304,201 C297.7,205.2 292.8,215 288,228 C283.2,241 278,262.5 275,279 C272,295.5 271.3,309.8 270,327 C268.7,344.2 267.5,363.8 267,382 C266.5,400.2 266.5,411.5 267,436 C267.5,460.5 269.2,503.5 270,529 C270.8,554.5 271.7,579 272,589" stroke="#173642" stroke-width="1" opacity="0.44"/><path d="M327,203 C326.3,202.7 335.3,201.7 323,201 C310.7,200.3 273,194.8 253,199 C233,203.2 218.2,213 203,226 C187.8,239 172,260.5 162,277 C152,293.5 147.7,308 143,325 C138.3,342 135.7,360.8 134,379 C132.3,397.2 131.5,409.3 133,434 C134.5,458.7 139.8,501.5 143,527 C146.2,552.5 150.5,577 152,587" stroke="#1c2833" stroke-width="1" opacity="0.57"/><path d="M327,203 C326.5,202.8 333.3,202.5 324,202 C314.7,201.5 286.3,196 271,200 C255.7,204 243.7,213.2 232,226 C220.3,238.8 208.5,260.5 201,277 C193.5,293.5 190.5,307.8 187,325 C183.5,342.2 181.3,361.8 180,380 C178.7,398.2 177.8,409.5 179,434 C180.2,458.5 184.7,501.5 187,527 C189.3,552.5 192,577 193,587" stroke="#2b2a39" stroke-width="1" opacity="0.36"/><path d="M327,205 C326.7,204.7 330.3,203.7 325,203 C319.7,202.3 303.5,196.8 295,201 C286.5,205.2 280.5,215 274,228 C267.5,241 260.3,262.5 256,279 C251.7,295.5 250,310 248,327 C246,344 244.7,362.8 244,381 C243.3,399.2 243.3,411.3 244,436 C244.7,460.7 246.7,503.5 248,529 C249.3,554.5 251.3,579 252,589" stroke="#262632" stroke-width="1" opacity="0.52"/><path d="M327,205 C326.8,204.7 329.7,203.7 326,203 C322.3,202.3 311,196.8 305,201 C299,205.2 294.7,215 290,228 C285.3,241 280,262.5 277,279 C274,295.5 273.3,309.8 272,327 C270.7,344.2 269.5,363.8 269,382 C268.5,400.2 268.5,411.5 269,436 C269.5,460.5 271.2,503.5 272,529 C272.8,554.5 273.7,579 274,589" stroke="#0b1a22" stroke-width="1" opacity="0.56"/><path d="M327,205 C326.8,204.8 328.8,204.5 326,204 C323.2,203.5 314.7,198 310,202 C305.3,206 301.7,215.2 298,228 C294.3,240.8 290.3,262.5 288,279 C285.7,295.5 285,309.8 284,327 C283,344.2 282.5,363.8 282,382 C281.5,400.2 280.7,411.5 281,436 C281.3,460.5 283.2,503.5 284,529 C284.8,554.5 285.7,579 286,589" stroke="#0b1a22" stroke-width="1.2" opacity="0.39"/><path d="M327,204 C326.7,203.8 331.8,203.5 325,203 C318.2,202.5 297.2,197 286,201 C274.8,205 266.5,214.2 258,227 C249.5,239.8 240.5,261.5 235,278 C229.5,294.5 227.7,308.8 225,326 C222.3,343.2 220,362.8 219,381 C218,399.2 218,410.5 219,435 C220,459.5 223.3,502.5 225,528 C226.7,553.5 228.3,578 229,588" stroke="#10222c" stroke-width="2.2" opacity="0.53"/><path d="M327,205 C326.8,204.8 328.8,204.5 326,204 C323.2,203.5 314.5,198 310,202 C305.5,206 302.5,215.2 299,228 C295.5,240.8 291.3,262.5 289,279 C286.7,295.5 286,309.8 285,327 C284,344.2 283.3,363.8 283,382 C282.7,400.2 282.7,411.5 283,436 C283.3,460.5 284.3,503.5 285,529 C285.7,554.5 286.7,579 287,589" stroke="#10222c" stroke-width="0.8" opacity="0.28"/><path d="M327,204 C326.5,203.7 332.7,202.7 324,202 C315.3,201.3 289,195.8 275,200 C261,204.2 250.7,214 240,227 C229.3,240 218,261.5 211,278 C204,294.5 201.2,309 198,326 C194.8,343 193.2,361.8 192,380 C190.8,398.2 190,410.3 191,435 C192,459.7 195.8,502.5 198,528 C200.2,553.5 203,578 204,588" stroke="#2b2a39" stroke-width="1.2" opacity="0.29"/><path d="M327,204 C326.5,203.7 331.8,202.7 324,202 C316.2,201.3 292.7,195.8 280,200 C267.3,204.2 257.5,214 248,227 C238.5,240 229.2,261.5 223,278 C216.8,294.5 214,309 211,326 C208,343 206.2,361.8 205,380 C203.8,398.2 203,410.3 204,435 C205,459.7 209,502.5 211,528 C213,553.5 215.2,578 216,588" stroke="#2b2a39" stroke-width="2.2" opacity="0.60"/><path d="M327,203 C326.3,202.7 335,201.7 323,201 C311,200.3 274.7,194.8 255,199 C235.3,203.2 220,213 205,226 C190,239 174.7,260.5 165,277 C155.3,293.5 151.5,308 147,325 C142.5,342 139.7,360.8 138,379 C136.3,397.2 135.5,409.3 137,434 C138.5,458.7 144,501.5 147,527 C150,552.5 153.7,577 155,587" stroke="#0b1a22" stroke-width="1.6" opacity="0.29"/><path d="M327,206 C327.2,205.7 326.8,204.8 328,204 C329.2,203.2 332,197.2 334,201 C336,204.8 338.2,216.3 340,227 C341.8,237.7 343.8,252.5 345,265 C346.2,277.5 346.5,289.5 347,302 C347.5,314.5 347.7,324.2 348,340 C348.3,355.8 348.8,372.8 349,397 C349.2,421.2 349.3,459.5 349,485 C348.7,510.5 347.5,529.2 347,550 C346.5,570.8 346.2,600 346,610" stroke="#173642" stroke-width="2.2" opacity="0.43"/><path d="M327,204 C327.5,203.7 324.3,202.8 330,202 C335.7,201.2 350.5,195.2 361,199 C371.5,202.8 383.2,214.3 393,225 C402.8,235.7 413.5,250.5 420,263 C426.5,275.5 428.8,287.5 432,300 C435.2,312.5 437,322.2 439,338 C441,353.8 443.7,370.8 444,395 C444.3,419.2 443,457.5 441,483 C439,508.5 434.5,527.2 432,548 C429.5,568.8 427,598 426,608" stroke="#1c2833" stroke-width="1" opacity="0.31"/><path d="M327,205 C327.2,204.7 325.5,203.8 328,203 C330.5,202.2 337.3,196.2 342,200 C346.7,203.8 351.7,215.3 356,226 C360.3,236.7 365,251.5 368,264 C371,276.5 372.5,288.5 374,301 C375.5,313.5 376.2,323.2 377,339 C377.8,354.8 378.8,371.8 379,396 C379.2,420.2 378.8,458.5 378,484 C377.2,509.5 375.2,528.2 374,549 C372.8,569.8 371.5,599 371,609" stroke="#1c2833" stroke-width="1.2" opacity="0.57"/><path d="M327,205 C327.2,204.8 326.3,204.8 328,204 C329.7,203.2 334,196.2 337,200 C340,203.8 343.3,216.3 346,227 C348.7,237.7 351.3,251.5 353,264 C354.7,276.5 355.2,289.5 356,302 C356.8,314.5 357.3,323.2 358,339 C358.7,354.8 359.8,372.8 360,397 C360.2,421.2 359.7,458.7 359,484 C358.3,509.3 356.7,528.2 356,549 C355.3,569.8 355.2,599 355,609" stroke="#070a0e" stroke-width="1" opacity="0.58"/><path d="M327,204 C327.3,203.8 324.2,203.8 329,203 C333.8,202.2 347.2,195.2 356,199 C364.8,202.8 373.8,215.3 382,226 C390.2,236.7 399.5,250.5 405,263 C410.5,275.5 412.3,288.5 415,301 C417.7,313.5 419.3,322.2 421,338 C422.7,353.8 424.7,371.8 425,396 C425.3,420.2 424.7,457.7 423,483 C421.3,508.3 417.2,527.2 415,548 C412.8,568.8 410.8,598 410,608" stroke="#0b1a22" stroke-width="1.2" opacity="0.39"/><path d="M327,204 C327.3,203.8 324.5,203.8 329,203 C333.5,202.2 345.7,195.2 354,199 C362.3,202.8 371.3,215.3 379,226 C386.7,236.7 395,250.5 400,263 C405,275.5 406.5,288.5 409,301 C411.5,313.5 413.5,322.2 415,338 C416.5,353.8 417.7,371.8 418,396 C418.3,420.2 418.3,457.7 417,483 C415.7,508.3 412,527.2 410,548 C408,568.8 405.8,598 405,608" stroke="#2b2a39" stroke-width="1.6" opacity="0.32"/><path d="M327,204 C327.3,203.8 325,203.8 329,203 C333,202.2 343.7,195.2 351,199 C358.3,202.8 366.2,215.3 373,226 C379.8,236.7 387.5,250.5 392,263 C396.5,275.5 397.7,288.5 400,301 C402.3,313.5 404.5,322.2 406,338 C407.5,353.8 408.8,371.8 409,396 C409.2,420.2 408.3,457.7 407,483 C405.7,508.3 402.7,527.2 401,548 C399.3,568.8 397.7,598 397,608" stroke="#070a0e" stroke-width="1" opacity="0.31"/><path d="M327,204 C327.3,203.8 324.3,203.8 329,203 C333.7,202.2 346.2,195.2 355,199 C363.8,202.8 373.8,215.3 382,226 C390.2,236.7 398.8,250.5 404,263 C409.2,275.5 410.5,288.5 413,301 C415.5,313.5 417.3,322.2 419,338 C420.7,353.8 422.7,371.8 423,396 C423.3,420.2 422.5,457.7 421,483 C419.5,508.3 416,527.2 414,548 C412,568.8 409.8,598 409,608" stroke="#2b2a39" stroke-width="1.6" opacity="0.57"/><path d="M327,204 C327.5,203.7 324,202.8 330,202 C336,201.2 351.8,195.2 363,199 C374.2,202.8 386.7,214.3 397,225 C407.3,235.7 418.3,250.5 425,263 C431.7,275.5 433.7,287.5 437,300 C440.3,312.5 442.8,322.2 445,338 C447.2,353.8 449.5,370.8 450,395 C450.5,419.2 450,457.5 448,483 C446,508.5 440.7,527.2 438,548 C435.3,568.8 433,598 432,608" stroke="#0b1a22" stroke-width="2.2" opacity="0.53"/><path d="M327,205 C327.3,204.7 325.3,203.8 329,203 C332.7,202.2 342.5,196.2 349,200 C355.5,203.8 362,215.3 368,226 C374,236.7 380.8,251.5 385,264 C389.2,276.5 391,288.5 393,301 C395,313.5 395.8,323.2 397,339 C398.2,354.8 399.7,371.8 400,396 C400.3,420.2 400.2,458.5 399,484 C397.8,509.5 394.7,528.2 393,549 C391.3,569.8 389.7,599 389,609" stroke="#0b1a22" stroke-width="1.6" opacity="0.45"/><path d="M327,205 C327.2,204.7 325.5,203.8 328,203 C330.5,202.2 337.5,196.2 342,200 C346.5,203.8 351,215.3 355,226 C359,236.7 363.2,251.5 366,264 C368.8,276.5 370.5,288.5 372,301 C373.5,313.5 374.2,323.2 375,339 C375.8,354.8 376.8,371.8 377,396 C377.2,420.2 376.8,458.5 376,484 C375.2,509.5 373.2,528.2 372,549 C370.8,569.8 369.5,599 369,609" stroke="#2b2a39" stroke-width="1.2" opacity="0.35"/><path d="M327,205 C327.2,204.8 326.2,204.8 328,204 C329.8,203.2 334.7,196.2 338,200 C341.3,203.8 345,216.3 348,227 C351,237.7 354,251.5 356,264 C358,276.5 359,289.5 360,302 C361,314.5 361.5,323.2 362,339 C362.5,354.8 362.8,372.8 363,397 C363.2,421.2 363.5,458.7 363,484 C362.5,509.3 360.8,528.2 360,549 C359.2,569.8 358.3,599 358,609" stroke="#1c2833" stroke-width="1.6" opacity="0.30"/><path d="M327,204 C327.3,203.8 325.3,203.8 329,203 C332.7,202.2 342.3,195.2 349,199 C355.7,202.8 362.8,215.3 369,226 C375.2,236.7 381.8,250.5 386,263 C390.2,275.5 392,288.5 394,301 C396,313.5 396.8,322.2 398,338 C399.2,353.8 400.7,371.8 401,396 C401.3,420.2 401.2,457.7 400,483 C398.8,508.3 395.7,527.2 394,548 C392.3,568.8 390.7,598 390,608" stroke="#173642" stroke-width="1.2" opacity="0.52"/><path d="M327,203 C327.7,202.7 323.5,201.8 331,201 C338.5,200.2 358.3,194.2 372,198 C385.7,201.8 400.5,213.3 413,224 C425.5,234.7 438.7,249.5 447,262 C455.3,274.5 458.8,286.5 463,299 C467.2,311.5 469.5,321.2 472,337 C474.5,352.8 477.5,369.8 478,394 C478.5,418.2 477.3,456.5 475,482 C472.7,507.5 467.2,526.2 464,547 C460.8,567.8 457.3,597 456,607" stroke="#10222c" stroke-width="1" opacity="0.50"/><path d="M327,205 C327.2,204.8 326.7,204.8 328,204 C329.3,203.2 332.5,196.2 335,200 C337.5,203.8 340.7,216.3 343,227 C345.3,237.7 347.5,251.5 349,264 C350.5,276.5 351.2,289.5 352,302 C352.8,314.5 353.5,323.2 354,339 C354.5,354.8 354.8,372.8 355,397 C355.2,421.2 355.3,458.7 355,484 C354.7,509.3 353.7,528.2 353,549 C352.3,569.8 351.3,599 351,609" stroke="#2b2a39" stroke-width="1.2" opacity="0.41"/><path d="M327,206 C327,205.7 326.2,204.8 327,204 C327.8,203.2 330.3,197.2 332,201 C333.7,204.8 335.5,216.3 337,227 C338.5,237.7 340,252.5 341,265 C342,277.5 342.5,289.5 343,302 C343.5,314.5 343.7,324.2 344,340 C344.3,355.8 345,372.8 345,397 C345,421.2 344.3,459.5 344,485 C343.7,510.5 343.3,529.2 343,550 C342.7,570.8 342.2,600 342,610" stroke="#2b2a39" stroke-width="2.2" opacity="0.27"/><path d="M327,205 C327.3,204.7 325.8,203.8 329,203 C332.2,202.2 340.3,196.2 346,200 C351.7,203.8 357.7,215.3 363,226 C368.3,236.7 374.3,251.5 378,264 C381.7,276.5 383.2,288.5 385,301 C386.8,313.5 388,323.2 389,339 C390,354.8 390.8,371.8 391,396 C391.2,420.2 391,458.5 390,484 C389,509.5 386.3,528.2 385,549 C383.7,569.8 382.5,599 382,609" stroke="#0e2c37" stroke-width="1.2" opacity="0.33"/><path d="M327,204 C327.3,203.8 324.7,203.8 329,203 C333.3,202.2 345,195.2 353,199 C361,202.8 369.7,215.3 377,226 C384.3,236.7 392.2,250.5 397,263 C401.8,275.5 403.7,288.5 406,301 C408.3,313.5 409.5,322.2 411,338 C412.5,353.8 414.7,371.8 415,396 C415.3,420.2 414.5,457.7 413,483 C411.5,508.3 407.8,527.2 406,548 C404.2,568.8 402.7,598 402,608" stroke="#1c2833" stroke-width="2.2" opacity="0.28"/><path d="M327,204 C327.5,203.7 324.7,202.8 330,202 C335.3,201.2 349.3,195.2 359,199 C368.7,202.8 379.2,214.3 388,225 C396.8,235.7 406.2,250.5 412,263 C417.8,275.5 420,287.5 423,300 C426,312.5 428.2,322.2 430,338 C431.8,353.8 433.7,370.8 434,395 C434.3,419.2 433.7,457.5 432,483 C430.3,508.5 426.3,527.2 424,548 C421.7,568.8 419,598 418,608" stroke="#06080b" stroke-width="1" opacity="0.50"/><path d="M327,203 C327.7,202.7 323.7,201.8 331,201 C338.3,200.2 357.3,194.2 371,198 C384.7,201.8 400.3,213.3 413,224 C425.7,234.7 438.8,249.5 447,262 C455.2,274.5 457.8,286.5 462,299 C466.2,311.5 469.3,321.2 472,337 C474.7,352.8 477.5,369.8 478,394 C478.5,418.2 477.5,456.5 475,482 C472.5,507.5 466.2,526.2 463,547 C459.8,567.8 457.2,597 456,607" stroke="#070a0e" stroke-width="0.8" opacity="0.47"/><path d="M327,203 C327.7,202.8 323.8,202.8 331,202 C338.2,201.2 356.8,194.2 370,198 C383.2,201.8 397.7,214.3 410,225 C422.3,235.7 435.8,249.5 444,262 C452.2,274.5 455,287.5 459,300 C463,312.5 465.5,321.2 468,337 C470.5,352.8 473.5,370.8 474,395 C474.5,419.2 473.3,456.7 471,482 C468.7,507.3 463.2,526.2 460,547 C456.8,567.8 453.3,597 452,607" stroke="#0e2c37" stroke-width="1.6" opacity="0.39"/><path d="M327,205 C327.2,204.8 326.8,204.8 328,204 C329.2,203.2 331.8,196.2 334,200 C336.2,203.8 338.8,216.3 341,227 C343.2,237.7 345.7,251.5 347,264 C348.3,276.5 348.3,289.5 349,302 C349.7,314.5 350.5,323.2 351,339 C351.5,354.8 352,372.8 352,397 C352,421.2 351.5,458.7 351,484 C350.5,509.3 349.5,528.2 349,549 C348.5,569.8 348.2,599 348,609" stroke="#262632" stroke-width="1.6" opacity="0.25"/><path d="M327,205 C327.3,204.7 326,203.8 329,203 C332,202.2 339.5,196.2 345,200 C350.5,203.8 356.8,215.3 362,226 C367.2,236.7 372.7,251.5 376,264 C379.3,276.5 380.3,288.5 382,301 C383.7,313.5 384.8,323.2 386,339 C387.2,354.8 388.8,371.8 389,396 C389.2,420.2 388,458.5 387,484 C386,509.5 384.2,528.2 383,549 C381.8,569.8 380.5,599 380,609" stroke="#0e2c37" stroke-width="1.2" opacity="0.44"/><path d="M327,204 C327.5,203.7 324.8,202.8 330,202 C335.2,201.2 348.5,195.2 358,199 C367.5,202.8 378.2,214.3 387,225 C395.8,235.7 405.2,250.5 411,263 C416.8,275.5 419,287.5 422,300 C425,312.5 427.2,322.2 429,338 C430.8,353.8 432.7,370.8 433,395 C433.3,419.2 432.7,457.5 431,483 C429.3,508.5 425.3,527.2 423,548 C420.7,568.8 418,598 417,608" stroke="#173642" stroke-width="2.2" opacity="0.55"/><path d="M327,205 C327.2,204.8 326.3,204.8 328,204 C329.7,203.2 334,196.2 337,200 C340,203.8 343.2,216.3 346,227 C348.8,237.7 352.2,251.5 354,264 C355.8,276.5 356.2,289.5 357,302 C357.8,314.5 358.5,323.2 359,339 C359.5,354.8 359.8,372.8 360,397 C360.2,421.2 360.5,458.7 360,484 C359.5,509.3 357.7,528.2 357,549 C356.3,569.8 356.2,599 356,609" stroke="#06080b" stroke-width="0.8" opacity="0.44"/><path d="M327,203 C327.5,202.8 323.3,202.8 330,202 C336.7,201.2 354.8,194.2 367,198 C379.2,201.8 391.8,214.3 403,225 C414.2,235.7 426.7,249.5 434,262 C441.3,274.5 443.3,287.5 447,300 C450.7,312.5 453.7,321.2 456,337 C458.3,352.8 460.5,370.8 461,395 C461.5,419.2 461.2,456.7 459,482 C456.8,507.3 450.8,526.2 448,547 C445.2,567.8 443,597 442,607" stroke="#070a0e" stroke-width="1.6" opacity="0.58"/><path d="M327,205 C327.2,204.8 325.8,204.8 328,204 C330.2,203.2 336,196.2 340,200 C344,203.8 348.3,216.3 352,227 C355.7,237.7 359.5,251.5 362,264 C364.5,276.5 365.8,289.5 367,302 C368.2,314.5 368.3,323.2 369,339 C369.7,354.8 370.8,372.8 371,397 C371.2,421.2 370.7,458.7 370,484 C369.3,509.3 367.8,528.2 367,549 C366.2,569.8 365.3,599 365,609" stroke="#06080b" stroke-width="1" opacity="0.55"/><path d="M327,204 C327.5,203.7 324.5,202.8 330,202 C335.5,201.2 350,195.2 360,199 C370,202.8 380.7,214.3 390,225 C399.3,235.7 409.8,250.5 416,263 C422.2,275.5 424,287.5 427,300 C430,312.5 432,322.2 434,338 C436,353.8 438.5,370.8 439,395 C439.5,419.2 438.8,457.5 437,483 C435.2,508.5 430.5,527.2 428,548 C425.5,568.8 423,598 422,608" stroke="#070a0e" stroke-width="1.6" opacity="0.58"/><path d="M327,204 C327.3,203.8 324.5,203.8 329,203 C333.5,202.2 345.8,195.2 354,199 C362.2,202.8 370.5,215.3 378,226 C385.5,236.7 394,250.5 399,263 C404,275.5 405.5,288.5 408,301 C410.5,313.5 412.5,322.2 414,338 C415.5,353.8 416.7,371.8 417,396 C417.3,420.2 417.3,457.7 416,483 C414.7,508.3 411,527.2 409,548 C407,568.8 404.8,598 404,608" stroke="#173642" stroke-width="1.6" opacity="0.46"/><path d="M327,204 C327.3,203.8 325,203.8 329,203 C333,202.2 343.7,195.2 351,199 C358.3,202.8 366.3,215.3 373,226 C379.7,236.7 386.7,250.5 391,263 C395.3,275.5 396.8,288.5 399,301 C401.2,313.5 402.5,322.2 404,338 C405.5,353.8 407.7,371.8 408,396 C408.3,420.2 407.3,457.7 406,483 C404.7,508.3 401.7,527.2 400,548 C398.3,568.8 396.7,598 396,608" stroke="#0e2c37" stroke-width="1.6" opacity="0.48"/><path d="M327,204 C327.5,203.7 324.3,202.8 330,202 C335.7,201.2 350.7,195.2 361,199 C371.3,202.8 382.3,214.3 392,225 C401.7,235.7 412.7,250.5 419,263 C425.3,275.5 427,287.5 430,300 C433,312.5 435,322.2 437,338 C439,353.8 441.5,370.8 442,395 C442.5,419.2 441.8,457.5 440,483 C438.2,508.5 433.5,527.2 431,548 C428.5,568.8 426,598 425,608" stroke="#0e2c37" stroke-width="1.2" opacity="0.26"/><path d="M327,203 C327.7,202.7 323.5,201.8 331,201 C338.5,200.2 358.2,194.2 372,198 C385.8,201.8 401.3,213.3 414,224 C426.7,234.7 439.7,249.5 448,262 C456.3,274.5 459.7,286.5 464,299 C468.3,311.5 471.3,321.2 474,337 C476.7,352.8 479.5,369.8 480,394 C480.5,418.2 479.5,456.5 477,482 C474.5,507.5 468.3,526.2 465,547 C461.7,567.8 458.3,597 457,607" stroke="#070a0e" stroke-width="1" opacity="0.39"/><path d="M327,203 C327.5,202.8 323.3,202.8 330,202 C336.7,201.2 354.5,194.2 367,198 C379.5,201.8 393.5,214.3 405,225 C416.5,235.7 428.5,249.5 436,262 C443.5,274.5 446.2,287.5 450,300 C453.8,312.5 456.7,321.2 459,337 C461.3,352.8 463.7,370.8 464,395 C464.3,419.2 463.2,456.7 461,482 C458.8,507.3 453.8,526.2 451,547 C448.2,567.8 445.2,597 444,607" stroke="#070a0e" stroke-width="1.2" opacity="0.51"/><path d="M327,205 C327.2,204.8 326.8,204.8 328,204 C329.2,203.2 331.8,196.2 334,200 C336.2,203.8 338.8,216.3 341,227 C343.2,237.7 345.7,251.5 347,264 C348.3,276.5 348.3,289.5 349,302 C349.7,314.5 350.5,323.2 351,339 C351.5,354.8 352,372.8 352,397 C352,421.2 351.5,458.7 351,484 C350.5,509.3 349.5,528.2 349,549 C348.5,569.8 348.2,599 348,609" stroke="#2b2a39" stroke-width="0.8" opacity="0.53"/><path d="M327,205 C327.2,204.7 325.3,203.8 328,203 C330.7,202.2 338,196.2 343,200 C348,203.8 353.3,215.3 358,226 C362.7,236.7 367.8,251.5 371,264 C374.2,276.5 375.5,288.5 377,301 C378.5,313.5 379.2,323.2 380,339 C380.8,354.8 381.8,371.8 382,396 C382.2,420.2 381.8,458.5 381,484 C380.2,509.5 378.2,528.2 377,549 C375.8,569.8 374.5,599 374,609" stroke="#06080b" stroke-width="1.2" opacity="0.59"/><path d="M327,205 C327.2,204.7 325.2,203.8 328,203 C330.8,202.2 338.7,196.2 344,200 C349.3,203.8 355,215.3 360,226 C365,236.7 370.7,251.5 374,264 C377.3,276.5 378.3,288.5 380,301 C381.7,313.5 383,323.2 384,339 C385,354.8 385.8,371.8 386,396 C386.2,420.2 386,458.5 385,484 C384,509.5 381.3,528.2 380,549 C378.7,569.8 377.5,599 377,609" stroke="#173642" stroke-width="0.8" opacity="0.58"/><path d="M327,203 C327.7,202.8 324,202.8 331,202 C338,201.2 356,194.2 369,198 C382,201.8 397,214.3 409,225 C421,235.7 433.2,249.5 441,262 C448.8,274.5 452,287.5 456,300 C460,312.5 462.5,321.2 465,337 C467.5,352.8 470.5,370.8 471,395 C471.5,419.2 470.3,456.7 468,482 C465.7,507.3 460,526.2 457,547 C454,567.8 451.2,597 450,607" stroke="#06080b" stroke-width="1" opacity="0.59"/><path d="M327,203 C327.7,202.7 323.2,201.8 331,201 C338.8,200.2 359.5,194.2 374,198 C388.5,201.8 404.5,213.3 418,224 C431.5,234.7 446.2,249.5 455,262 C463.8,274.5 466.7,286.5 471,299 C475.3,311.5 478.2,321.2 481,337 C483.8,352.8 487.5,369.8 488,394 C488.5,418.2 486.7,456.5 484,482 C481.3,507.5 475.3,526.2 472,547 C468.7,567.8 465.3,597 464,607" stroke="#0b1a22" stroke-width="0.8" opacity="0.47"/><path d="M327,204 C327.3,203.8 324.3,203.8 329,203 C333.7,202.2 346.2,195.2 355,199 C363.8,202.8 373.8,215.3 382,226 C390.2,236.7 398.7,250.5 404,263 C409.3,275.5 411.3,288.5 414,301 C416.7,313.5 418.3,322.2 420,338 C421.7,353.8 423.7,371.8 424,396 C424.3,420.2 423.7,457.7 422,483 C420.3,508.3 416.2,527.2 414,548 C411.8,568.8 409.8,598 409,608" stroke="#262632" stroke-width="0.8" opacity="0.37"/><path d="M327,205 C327.2,204.8 325.8,204.8 328,204 C330.2,203.2 336.2,196.2 340,200 C343.8,203.8 347.5,216.3 351,227 C354.5,237.7 358.5,251.5 361,264 C363.5,276.5 364.8,289.5 366,302 C367.2,314.5 367.3,323.2 368,339 C368.7,354.8 369.8,372.8 370,397 C370.2,421.2 369.7,458.7 369,484 C368.3,509.3 366.8,528.2 366,549 C365.2,569.8 364.3,599 364,609" stroke="#2b2a39" stroke-width="1.6" opacity="0.30"/><path d="M327,204 C327.3,203.8 324.7,203.8 329,203 C333.3,202.2 344.8,195.2 353,199 C361.2,202.8 370.5,215.3 378,226 C385.5,236.7 393.2,250.5 398,263 C402.8,275.5 404.5,288.5 407,301 C409.5,313.5 411.3,322.2 413,338 C414.7,353.8 416.7,371.8 417,396 C417.3,420.2 416.5,457.7 415,483 C413.5,508.3 410,527.2 408,548 C406,568.8 403.8,598 403,608" stroke="#0e2c37" stroke-width="2.2" opacity="0.49"/><path d="M327,204 C327.3,203.8 325,203.8 329,203 C333,202.2 343.7,195.2 351,199 C358.3,202.8 366.3,215.3 373,226 C379.7,236.7 386.7,250.5 391,263 C395.3,275.5 396.8,288.5 399,301 C401.2,313.5 402.7,322.2 404,338 C405.3,353.8 406.7,371.8 407,396 C407.3,420.2 407.2,457.7 406,483 C404.8,508.3 401.8,527.2 400,548 C398.2,568.8 395.8,598 395,608" stroke="#173642" stroke-width="1" opacity="0.58"/><path d="M327,203 C327.7,202.8 323.8,202.8 331,202 C338.2,201.2 356.8,194.2 370,198 C383.2,201.8 397.8,214.3 410,225 C422.2,235.7 435,249.5 443,262 C451,274.5 454,287.5 458,300 C462,312.5 464.5,321.2 467,337 C469.5,352.8 472.5,370.8 473,395 C473.5,419.2 472.3,456.7 470,482 C467.7,507.3 462.2,526.2 459,547 C455.8,567.8 452.3,597 451,607" stroke="#262632" stroke-width="1.6" opacity="0.29"/><path d="M327,202 C327.7,201.8 322.5,201.8 331,201 C339.5,200.2 362.2,193.2 378,197 C393.8,200.8 411.5,213.3 426,224 C440.5,234.7 455.5,248.5 465,261 C474.5,273.5 478.2,286.5 483,299 C487.8,311.5 491,320.2 494,336 C497,351.8 500.3,369.8 501,394 C501.7,418.2 500.8,455.7 498,481 C495.2,506.3 487.8,525.2 484,546 C480.2,566.8 476.5,596 475,606" stroke="#173642" stroke-width="2.2" opacity="0.55"/><path d="M327,205 C327.3,204.7 325.8,203.8 329,203 C332.2,202.2 340.2,196.2 346,200 C351.8,203.8 358.7,215.3 364,226 C369.3,236.7 374.5,251.5 378,264 C381.5,276.5 383.2,288.5 385,301 C386.8,313.5 388,323.2 389,339 C390,354.8 390.8,371.8 391,396 C391.2,420.2 391,458.5 390,484 C389,509.5 386.3,528.2 385,549 C383.7,569.8 382.5,599 382,609" stroke="#262632" stroke-width="1.2" opacity="0.51"/><path d="M327,205 C327.2,204.7 325.5,203.8 328,203 C330.5,202.2 337.5,196.2 342,200 C346.5,203.8 351,215.3 355,226 C359,236.7 363.3,251.5 366,264 C368.7,276.5 369.7,288.5 371,301 C372.3,313.5 373.2,323.2 374,339 C374.8,354.8 375.8,371.8 376,396 C376.2,420.2 375.7,458.5 375,484 C374.3,509.5 373,528.2 372,549 C371,569.8 369.5,599 369,609" stroke="#262632" stroke-width="2.2" opacity="0.59"/><path d="M327,202 C327.8,201.8 323.3,201.8 332,201 C340.7,200.2 363,193.2 379,197 C395,200.8 413,213.3 428,224 C443,234.7 459.2,248.5 469,261 C478.8,273.5 482.2,286.5 487,299 C491.8,311.5 495,320.2 498,336 C501,351.8 504.3,369.8 505,394 C505.7,418.2 504.8,455.7 502,481 C499.2,506.3 491.8,525.2 488,546 C484.2,566.8 480.5,596 479,606" stroke="#070a0e" stroke-width="0.8" opacity="0.25"/><path d="M327,205 C327.3,204.7 326,203.8 329,203 C332,202.2 339.5,196.2 345,200 C350.5,203.8 356.8,215.3 362,226 C367.2,236.7 372.7,251.5 376,264 C379.3,276.5 380.3,288.5 382,301 C383.7,313.5 384.8,323.2 386,339 C387.2,354.8 388.7,371.8 389,396 C389.3,420.2 389,458.5 388,484 C387,509.5 384.3,528.2 383,549 C381.7,569.8 380.5,599 380,609" stroke="#070a0e" stroke-width="2.2" opacity="0.26"/><path d="M327,205 C327.2,204.7 325.3,203.8 328,203 C330.7,202.2 338,196.2 343,200 C348,203.8 353.3,215.3 358,226 C362.7,236.7 367.8,251.5 371,264 C374.2,276.5 375.5,288.5 377,301 C378.5,313.5 379.2,323.2 380,339 C380.8,354.8 381.8,371.8 382,396 C382.2,420.2 381.8,458.5 381,484 C380.2,509.5 378.2,528.2 377,549 C375.8,569.8 374.5,599 374,609" stroke="#0e2c37" stroke-width="0.8" opacity="0.51"/><path d="M327,202 C327.8,201.8 323.3,201.8 332,201 C340.7,200.2 363,193.2 379,197 C395,200.8 413.2,213.3 428,224 C442.8,234.7 458.3,248.5 468,261 C477.7,273.5 481.2,286.5 486,299 C490.8,311.5 493.8,320.2 497,336 C500.2,351.8 504.3,369.8 505,394 C505.7,418.2 504,455.7 501,481 C498,506.3 490.8,525.2 487,546 C483.2,566.8 479.5,596 478,606" stroke="#1c2833" stroke-width="2.2" opacity="0.33"/><path d="M327,202 C327.8,201.8 322.7,201.8 332,201 C341.3,200.2 365.8,193.2 383,197 C400.2,200.8 419.2,213.3 435,224 C450.8,234.7 467.7,248.5 478,261 C488.3,273.5 491.8,286.5 497,299 C502.2,311.5 505.7,320.2 509,336 C512.3,351.8 516.3,369.8 517,394 C517.7,418.2 516.2,455.7 513,481 C509.8,506.3 502,525.2 498,546 C494,566.8 490.5,596 489,606" stroke="#06080b" stroke-width="1.6" opacity="0.37"/><path d="M327,204 C327.3,203.8 325.3,203.8 329,203 C332.7,202.2 342.2,195.2 349,199 C355.8,202.8 363.7,215.3 370,226 C376.3,236.7 382.8,250.5 387,263 C391.2,275.5 392.8,288.5 395,301 C397.2,313.5 398.7,322.2 400,338 C401.3,353.8 402.8,371.8 403,396 C403.2,420.2 402.3,457.7 401,483 C399.7,508.3 396.5,527.2 395,548 C393.5,568.8 392.5,598 392,608" stroke="#06080b" stroke-width="1" opacity="0.54"/><path d="M327,205 C327.2,204.8 326.5,204.8 328,204 C329.5,203.2 333.5,196.2 336,200 C338.5,203.8 340.7,216.3 343,227 C345.3,237.7 348.3,251.5 350,264 C351.7,276.5 352.2,289.5 353,302 C353.8,314.5 354.5,323.2 355,339 C355.5,354.8 356,372.8 356,397 C356,421.2 355.5,458.7 355,484 C354.5,509.3 353.5,528.2 353,549 C352.5,569.8 352.2,599 352,609" stroke="#0b1a22" stroke-width="1.6" opacity="0.53"/><path d="M327,203 C327.5,202.8 323.8,202.8 330,202 C336.2,201.2 352.5,194.2 364,198 C375.5,201.8 388.3,214.3 399,225 C409.7,235.7 421.2,249.5 428,262 C434.8,274.5 436.7,287.5 440,300 C443.3,312.5 445.8,321.2 448,337 C450.2,352.8 452.5,370.8 453,395 C453.5,419.2 453,456.7 451,482 C449,507.3 443.7,526.2 441,547 C438.3,567.8 436,597 435,607" stroke="#262632" stroke-width="1.6" opacity="0.40"/><path d="M327,205 C327.3,204.7 326,203.8 329,203 C332,202.2 339.5,196.2 345,200 C350.5,203.8 356.8,215.3 362,226 C367.2,236.7 372.7,251.5 376,264 C379.3,276.5 380.3,288.5 382,301 C383.7,313.5 384.8,323.2 386,339 C387.2,354.8 388.8,371.8 389,396 C389.2,420.2 388,458.5 387,484 C386,509.5 384.3,528.2 383,549 C381.7,569.8 379.7,599 379,609" stroke="#1c2833" stroke-width="1.2" opacity="0.30"/><path d="M327,203 C327.7,202.7 323,201.8 331,201 C339,200.2 360.2,194.2 375,198 C389.8,201.8 406.3,213.3 420,224 C433.7,234.7 448,249.5 457,262 C466,274.5 469.5,286.5 474,299 C478.5,311.5 481.2,321.2 484,337 C486.8,352.8 490.3,369.8 491,394 C491.7,418.2 490.7,456.5 488,482 C485.3,507.5 478.5,526.2 475,547 C471.5,567.8 468.3,597 467,607" stroke="#2b2a39" stroke-width="1.2" opacity="0.44"/><path d="M327,203 C327.7,202.7 323.7,201.8 331,201 C338.3,200.2 357.7,194.2 371,198 C384.3,201.8 398.7,213.3 411,224 C423.3,234.7 436.8,249.5 445,262 C453.2,274.5 456,286.5 460,299 C464,311.5 466.5,321.2 469,337 C471.5,352.8 474.5,369.8 475,394 C475.5,418.2 474.3,456.5 472,482 C469.7,507.5 464.2,526.2 461,547 C457.8,567.8 454.3,597 453,607" stroke="#1c2833" stroke-width="1.6" opacity="0.48"/><path d="M327,204 C327.5,203.7 324.2,202.8 330,202 C335.8,201.2 351.3,195.2 362,199 C372.7,202.8 384.2,214.3 394,225 C403.8,235.7 414.5,250.5 421,263 C427.5,275.5 429.7,287.5 433,300 C436.3,312.5 438.8,322.2 441,338 C443.2,353.8 445.7,370.8 446,395 C446.3,419.2 445,457.5 443,483 C441,508.5 436.5,527.2 434,548 C431.5,568.8 429,598 428,608" stroke="#06080b" stroke-width="1.2" opacity="0.28"/><path d="M327,205 C327.2,204.8 326.5,204.8 328,204 C329.5,203.2 333.3,196.2 336,200 C338.7,203.8 341.5,216.3 344,227 C346.5,237.7 349.3,251.5 351,264 C352.7,276.5 353.2,289.5 354,302 C354.8,314.5 355.5,323.2 356,339 C356.5,354.8 356.8,372.8 357,397 C357.2,421.2 357.3,458.7 357,484 C356.7,509.3 355.7,528.2 355,549 C354.3,569.8 353.3,599 353,609" stroke="#06080b" stroke-width="1.6" opacity="0.35"/><path d="M327,203 C327.7,202.7 323.5,201.8 331,201 C338.5,200.2 358.2,194.2 372,198 C385.8,201.8 401.2,213.3 414,224 C426.8,234.7 440.7,249.5 449,262 C457.3,274.5 459.8,286.5 464,299 C468.2,311.5 471.3,321.2 474,337 C476.7,352.8 479.5,369.8 480,394 C480.5,418.2 479.5,456.5 477,482 C474.5,507.5 468.2,526.2 465,547 C461.8,567.8 459.2,597 458,607" stroke="#0b1a22" stroke-width="1.2" opacity="0.32"/><path d="M327,203 C327.5,202.8 323.5,202.8 330,202 C336.5,201.2 354,194.2 366,198 C378,201.8 390.8,214.3 402,225 C413.2,235.7 425.7,249.5 433,262 C440.3,274.5 442.3,287.5 446,300 C449.7,312.5 452.7,321.2 455,337 C457.3,352.8 459.7,370.8 460,395 C460.3,419.2 459.2,456.7 457,482 C454.8,507.3 449.7,526.2 447,547 C444.3,567.8 442,597 441,607" stroke="#0b1a22" stroke-width="1.2" opacity="0.42"/><path d="M327,203 C327.7,202.7 323.5,201.8 331,201 C338.5,200.2 358.3,194.2 372,198 C385.7,201.8 400.5,213.3 413,224 C425.5,234.7 438.7,249.5 447,262 C455.3,274.5 458.8,286.5 463,299 C467.2,311.5 469.5,321.2 472,337 C474.5,352.8 477.5,369.8 478,394 C478.5,418.2 477.3,456.5 475,482 C472.7,507.5 467.2,526.2 464,547 C460.8,567.8 457.3,597 456,607" stroke="#2b2a39" stroke-width="1.2" opacity="0.56"/><path d="M327,205 C327.2,204.7 325.3,203.8 328,203 C330.7,202.2 338,196.2 343,200 C348,203.8 353.5,215.3 358,226 C362.5,236.7 367,251.5 370,264 C373,276.5 374.5,288.5 376,301 C377.5,313.5 378,323.2 379,339 C380,354.8 381.8,371.8 382,396 C382.2,420.2 381,458.5 380,484 C379,509.5 377,528.2 376,549 C375,569.8 374.3,599 374,609" stroke="#2b2a39" stroke-width="1.2" opacity="0.57"/><path d="M327,205 C327.3,204.7 325.5,203.8 329,203 C332.5,202.2 341.5,196.2 348,200 C354.5,203.8 361.8,215.3 368,226 C374.2,236.7 381,251.5 385,264 C389,276.5 390,288.5 392,301 C394,313.5 395.7,323.2 397,339 C398.3,354.8 399.8,371.8 400,396 C400.2,420.2 399.2,458.5 398,484 C396.8,509.5 394.5,528.2 393,549 C391.5,569.8 389.7,599 389,609" stroke="#06080b" stroke-width="2.2" opacity="0.46"/><path d="M327,202 C327.7,201.8 322.3,201.8 331,201 C339.7,200.2 363,193.2 379,197 C395,200.8 412.3,213.3 427,224 C441.7,234.7 457.3,248.5 467,261 C476.7,273.5 480.2,286.5 485,299 C489.8,311.5 493,320.2 496,336 C499,351.8 502.5,369.8 503,394 C503.5,418.2 501.8,455.7 499,481 C496.2,506.3 489.7,525.2 486,546 C482.3,566.8 478.5,596 477,606" stroke="#0e2c37" stroke-width="1.6" opacity="0.44"/><path d="M327,202 C327.8,201.8 322.7,201.8 332,201 C341.3,200.2 365.7,193.2 383,197 C400.3,200.8 420,213.3 436,224 C452,234.7 468.5,248.5 479,261 C489.5,273.5 493.7,286.5 499,299 C504.3,311.5 507.7,320.2 511,336 C514.3,351.8 518.3,369.8 519,394 C519.7,418.2 518.2,455.7 515,481 C511.8,506.3 504.2,525.2 500,546 C495.8,566.8 491.7,596 490,606" stroke="#06080b" stroke-width="1.2" opacity="0.33"/><path d="M327,202 C327.8,201.8 322.8,201.8 332,201 C341.2,200.2 365.2,193.2 382,197 C398.8,200.8 417.3,213.3 433,224 C448.7,234.7 465.7,248.5 476,261 C486.3,273.5 489.8,286.5 495,299 C500.2,311.5 503.8,320.2 507,336 C510.2,351.8 513.3,369.8 514,394 C514.7,418.2 514,455.7 511,481 C508,506.3 500,525.2 496,546 C492,566.8 488.5,596 487,606" stroke="#173642" stroke-width="1" opacity="0.28"/><path d="M327,203 C327.7,202.7 323,201.8 331,201 C339,200.2 360.3,194.2 375,198 C389.7,201.8 405.5,213.3 419,224 C432.5,234.7 447,249.5 456,262 C465,274.5 468.5,286.5 473,299 C477.5,311.5 480.2,321.2 483,337 C485.8,352.8 489.5,369.8 490,394 C490.5,418.2 488.7,456.5 486,482 C483.3,507.5 477.3,526.2 474,547 C470.7,567.8 467.3,597 466,607" stroke="#070a0e" stroke-width="1.2" opacity="0.49"/><path d="M327,204 C327.5,203.7 324.2,202.8 330,202 C335.8,201.2 351.2,195.2 362,199 C372.8,202.8 385,214.3 395,225 C405,235.7 415.5,250.5 422,263 C428.5,275.5 430.7,287.5 434,300 C437.3,312.5 440,322.2 442,338 C444,353.8 445.7,370.8 446,395 C446.3,419.2 445.8,457.5 444,483 C442.2,508.5 437.5,527.2 435,548 C432.5,568.8 430,598 429,608" stroke="#262632" stroke-width="2.2" opacity="0.38"/><path d="M327,204 C327.3,203.8 324.8,203.8 329,203 C333.2,202.2 344.3,195.2 352,199 C359.7,202.8 367.8,215.3 375,226 C382.2,236.7 390.3,250.5 395,263 C399.7,275.5 400.7,288.5 403,301 C405.3,313.5 407.5,322.2 409,338 C410.5,353.8 411.8,371.8 412,396 C412.2,420.2 411.3,457.7 410,483 C408.7,508.3 405.8,527.2 404,548 C402.2,568.8 399.8,598 399,608" stroke="#1c2833" stroke-width="2.2" opacity="0.45"/></g>
<path d="M131.8,276 C134.1,272.9 140.2,263.5 145.4,257.7 C150.6,251.9 157.2,246.4 163,241 C168.8,235.6 173.4,230 180,225 C186.6,220 195,214.7 202.5,211 C210,207.3 218.8,205.1 225,203 C231.2,200.9 232.5,199.4 240,198.5 C247.5,197.6 259.2,197.6 270,197.5 C280.8,197.4 296.3,197.5 305,198 C313.7,198.5 317.5,200.1 322,200.5 C326.5,200.9 328.2,200.9 332,200.5 C335.8,200.1 340,198.7 345,198 C350,197.3 355.3,196.7 362,196.5 C368.7,196.3 378.2,196.2 385,197 C391.8,197.8 397.6,199.2 403,201.5 C408.4,203.8 411.6,207.3 417.5,211 C423.4,214.7 431.8,219.3 438.7,223.5 C445.6,227.7 453.1,231.8 458.7,236 C464.3,240.2 468.3,244.3 472.5,248.5 C476.7,252.7 480.6,256.8 483.7,261 C486.8,265.2 488.6,269.3 491,273.5 C493.4,277.7 495.9,281.8 498,286 C500.1,290.2 501.9,294.3 503.7,298.5 C505.5,302.7 507.2,306.8 508.7,311 C510.2,315.2 511.3,319.3 512.5,323.5 C513.7,327.7 515,331.8 516,336 C517,340.2 517.9,342.8 518.7,348.5 C519.5,354.2 520.1,362.5 521,370 C521.9,377.5 523.3,383.3 524,393.5 C524.7,403.7 525,420.6 525,431 C525,441.4 524.5,447.7 523.7,456 C522.9,464.3 521.3,472.7 520,481 C518.7,489.3 517.7,500.2 516,506 C514.3,511.8 511,514.3 510,516" fill="none" stroke="#040507" stroke-width="26" filter="url(#bl)" opacity="0.9"/>
<ellipse cx="165" cy="400" rx="55" ry="110" fill="url(#tl)" transform="rotate(12 165 400)"/>
<path d="M215,443 L245,408 L275,373 L304,341 L313,344 L340,368 L371,398 L400,420 L430,440 L436,486 L436,538 L232,548 L222,507Z" fill="url(#bg2)"/>
<g stroke-width="1" opacity="0.5"><line x1="236" y1="430" x2="236.6" y2="547.3" stroke="#23404c"/><line x1="238.7" y1="422.8" x2="239.6" y2="530.4" stroke="#23404c"/><line x1="242.4" y1="444.6" x2="242" y2="527.8" stroke="#1a2a3a"/><line x1="245.9" y1="424.2" x2="246.7" y2="533.7" stroke="#1d3d4a"/><line x1="248.3" y1="432" x2="247.7" y2="530" stroke="#0a1a20"/><line x1="251" y1="433.4" x2="250.8" y2="540.6" stroke="#0a1a20"/><line x1="253.9" y1="437.1" x2="253.9" y2="544.8" stroke="#0a1a20"/><line x1="258" y1="401.1" x2="257.8" y2="543.3" stroke="#1d3d4a"/><line x1="262.1" y1="417.2" x2="262.8" y2="549.9" stroke="#0a1a20"/><line x1="266.3" y1="422.5" x2="266.1" y2="543.9" stroke="#1a2a3a"/><line x1="268.6" y1="390.3" x2="268" y2="551.9" stroke="#16323d"/><line x1="271.1" y1="405.7" x2="270.5" y2="545.2" stroke="#23404c"/><line x1="274.3" y1="390" x2="274.3" y2="553.2" stroke="#1d3d4a"/><line x1="278.2" y1="386" x2="279" y2="530.4" stroke="#16323d"/><line x1="282.1" y1="371.4" x2="281.7" y2="539.5" stroke="#1d3d4a"/><line x1="284.8" y1="380.3" x2="285.2" y2="542.5" stroke="#1a2a3a"/><line x1="288.3" y1="371.5" x2="288.1" y2="531.2" stroke="#23404c"/><line x1="292.6" y1="393.8" x2="292.6" y2="543.5" stroke="#1a2a3a"/><line x1="295.4" y1="392.1" x2="295.8" y2="551.6" stroke="#23404c"/><line x1="299.4" y1="364.2" x2="298.5" y2="550.2" stroke="#0a1a20"/><line x1="303.8" y1="389" x2="304.4" y2="536.8" stroke="#1a2a3a"/><line x1="307.8" y1="388.6" x2="308.6" y2="527.6" stroke="#16323d"/><line x1="312" y1="392.7" x2="312.4" y2="538.6" stroke="#16323d"/><line x1="315.6" y1="366.5" x2="314.9" y2="530.4" stroke="#23404c"/><line x1="319.9" y1="389.4" x2="319.4" y2="529.7" stroke="#1a2a3a"/><line x1="323.3" y1="366.3" x2="322.7" y2="547.6" stroke="#1d3d4a"/><line x1="327.6" y1="366.2" x2="327.1" y2="529.6" stroke="#23404c"/><line x1="331.5" y1="367.5" x2="330.6" y2="539.4" stroke="#0a1a20"/><line x1="335.4" y1="386.4" x2="336" y2="540.2" stroke="#1d3d4a"/><line x1="338.5" y1="402" x2="337.9" y2="528.5" stroke="#0a1a20"/><line x1="342" y1="391.2" x2="341.6" y2="530.4" stroke="#23404c"/><line x1="345.1" y1="394.8" x2="344.8" y2="553.9" stroke="#1d3d4a"/><line x1="348.9" y1="382.1" x2="349.4" y2="537" stroke="#0a1a20"/><line x1="352.9" y1="386" x2="353.3" y2="538.5" stroke="#0a1a20"/><line x1="356.2" y1="394.7" x2="356.9" y2="529.2" stroke="#1d3d4a"/><line x1="360.3" y1="413" x2="359.9" y2="551.2" stroke="#16323d"/><line x1="363.4" y1="409.2" x2="363.9" y2="534.3" stroke="#23404c"/><line x1="366.9" y1="396.2" x2="367.3" y2="531.3" stroke="#0a1a20"/><line x1="369.8" y1="428.7" x2="369.7" y2="541.8" stroke="#23404c"/><line x1="372.9" y1="401.7" x2="373.3" y2="543.4" stroke="#16323d"/><line x1="376.7" y1="407.6" x2="376.9" y2="537.3" stroke="#0a1a20"/><line x1="379.1" y1="411.2" x2="379" y2="530.4" stroke="#1d3d4a"/><line x1="383.1" y1="418.5" x2="382.4" y2="549.1" stroke="#1a2a3a"/><line x1="385.8" y1="413.9" x2="385.5" y2="545.4" stroke="#0a1a20"/><line x1="388.9" y1="411.8" x2="389.9" y2="537.2" stroke="#23404c"/><line x1="393" y1="437.7" x2="392.5" y2="543" stroke="#1d3d4a"/><line x1="395.6" y1="427.5" x2="395.3" y2="538.4" stroke="#1a2a3a"/><line x1="399" y1="447.1" x2="399.4" y2="549.1" stroke="#1a2a3a"/><line x1="401.8" y1="440.6" x2="401.5" y2="534.4" stroke="#16323d"/><line x1="405.1" y1="429.5" x2="406.1" y2="546" stroke="#1a2a3a"/><line x1="408.9" y1="460.4" x2="409.2" y2="541.9" stroke="#1d3d4a"/><line x1="411.6" y1="432.8" x2="411.4" y2="532.8" stroke="#1a2a3a"/><line x1="414.5" y1="435.5" x2="414.5" y2="550.4" stroke="#23404c"/><line x1="417" y1="468.4" x2="417.1" y2="529.8" stroke="#1a2a3a"/><line x1="420.5" y1="456.8" x2="420.7" y2="533.4" stroke="#23404c"/><line x1="423" y1="468.1" x2="422.5" y2="534.1" stroke="#23404c"/><line x1="426.5" y1="471.2" x2="427.1" y2="531.2" stroke="#1a2a3a"/><line x1="429.8" y1="458.9" x2="429.4" y2="547.9" stroke="#16323d"/><line x1="433.5" y1="473.6" x2="433.8" y2="536.7" stroke="#1a2a3a"/></g>
<g fill="none"><path d="M310.6,292 Q265.2,367.4 203.8,450.7" stroke="#0a161c" stroke-width="2" opacity="0.40"/><path d="M308.6,319 Q261.7,394.2 198.8,477.4" stroke="#0e2a33" stroke-width="2" opacity="0.42"/><path d="M320.9,301.4 Q279.3,387.9 221.7,482.5" stroke="#1a2a36" stroke-width="3" opacity="0.53"/><path d="M325.9,316.1 Q281.3,385.3 220.8,462.4" stroke="#0a161c" stroke-width="1.5" opacity="0.47"/><path d="M338.1,306.8 Q295,390.5 235.9,482.2" stroke="#15303a" stroke-width="1.5" opacity="0.39"/><path d="M327.2,302.3 Q282.7,385.9 222.3,477.6" stroke="#1a2a36" stroke-width="1.5" opacity="0.37"/><path d="M334.3,317.2 Q293.9,387.1 237.5,465" stroke="#0b1d25" stroke-width="2" opacity="0.46"/><path d="M331.7,317.4 Q288.6,392.3 229.5,475.2" stroke="#0e2a33" stroke-width="2.5" opacity="0.56"/><path d="M322.4,297.7 Q277.8,379.2 217.1,468.7" stroke="#0b1d25" stroke-width="1.5" opacity="0.46"/><path d="M312.4,308.3 Q265.2,379.1 201.9,457.8" stroke="#0e2a33" stroke-width="2.5" opacity="0.31"/><path d="M311.2,304.5 Q265.8,374.1 204.4,451.7" stroke="#0e2a33" stroke-width="2" opacity="0.31"/><path d="M308.9,300.2 Q261.4,387.8 198,483.4" stroke="#0a161c" stroke-width="2" opacity="0.36"/><path d="M337.5,292.8 Q293.2,382.6 232.9,480.4" stroke="#0a161c" stroke-width="1.5" opacity="0.35"/><path d="M340,297.1 Q296.2,371.4 236.4,453.7" stroke="#0b1d25" stroke-width="1.5" opacity="0.39"/><path d="M337.6,299.2 Q292.8,386.2 231.9,481.2" stroke="#15303a" stroke-width="3" opacity="0.42"/><path d="M313.7,294.6 Q267.6,371.7 205.6,456.8" stroke="#0e2a33" stroke-width="2" opacity="0.45"/></g>
<path d="M313,343 C318.3,346.8 333.8,356.8 345,366 C356.2,375.2 365.8,386.3 380,398 C394.2,409.7 421.7,429.7 430,436" fill="none" stroke="#2a4452" stroke-width="1.2" opacity="0.35"/>
<path d="M232,206 C227.5,211.8 212.8,228.5 205,241 C197.2,253.5 190.5,266.8 185,281 C179.5,295.2 174.8,311.8 172,326 C169.2,340.2 168,352.7 168,366 C168,379.3 169.2,392.7 172,406 C174.8,419.3 179.5,430.2 185,446 C190.5,461.8 201.7,491.8 205,501" fill="none" stroke="#091a22" stroke-width="4" opacity="0.8"/>
<path d="M234.5,206 C230,211.8 215.3,228.5 207.5,241 C199.7,253.5 193,266.8 187.5,281 C182,295.2 177.3,311.8 174.5,326 C171.7,340.2 170.5,352.7 170.5,366 C170.5,379.3 171.7,392.7 174.5,406 C177.3,419.3 182,430.2 187.5,446 C193,461.8 204.2,491.8 207.5,501" fill="none" stroke="#5d93a6" stroke-width="1" stroke-dasharray="1.5 2" opacity="0.55"/>
<path d="M258,201 C253.7,206.8 239.2,223.5 232,236 C224.8,248.5 219,261.8 215,276 C211,290.2 208.8,306 208,321 C207.2,336 208,351.8 210,366 C212,380.2 216.3,392.7 220,406 C223.7,419.3 230,439.3 232,446" fill="none" stroke="#091a22" stroke-width="4" opacity="0.8"/>
<path d="M260.5,201 C256.2,206.8 241.7,223.5 234.5,236 C227.3,248.5 221.5,261.8 217.5,276 C213.5,290.2 211.3,306 210.5,321 C209.7,336 210.5,351.8 212.5,366 C214.5,380.2 218.8,392.7 222.5,406 C226.2,419.3 232.5,439.3 234.5,446" fill="none" stroke="#5d93a6" stroke-width="1" stroke-dasharray="1.5 2" opacity="0.55"/>
<path d="M362,206 C365.8,211 378.3,224.3 385,236 C391.7,247.7 397.5,262.7 402,276 C406.5,289.3 409,302.7 412,316 C415,329.3 417.3,342.7 420,356 C422.7,369.3 426,382.7 428,396 C430,409.3 430.7,421 432,436 C433.3,451 435.3,477.7 436,486" fill="none" stroke="#091a22" stroke-width="4" opacity="0.8"/>
<path d="M360,206 C363.8,211 376.3,224.3 383,236 C389.7,247.7 395.5,262.7 400,276 C404.5,289.3 407,302.7 410,316 C413,329.3 415.3,342.7 418,356 C420.7,369.3 424,382.7 426,396 C428,409.3 428.7,421 430,436 C431.3,451 433.3,477.7 434,486" fill="none" stroke="#5d93a6" stroke-width="1" stroke-dasharray="1.5 2" opacity="0.55"/>
<path d="M440,246 C443.7,252.7 456.2,272.7 462,286 C467.8,299.3 471.7,312.7 475,326 C478.3,339.3 480,352.7 482,366 C484,379.3 485.7,392.7 487,406 C488.3,419.3 489.5,432.7 490,446 C490.5,459.3 490,479.3 490,486" fill="none" stroke="#091a22" stroke-width="3" opacity="0.8"/>
<path d="M438,246 C441.7,252.7 454.2,272.7 460,286 C465.8,299.3 469.7,312.7 473,326 C476.3,339.3 478,352.7 480,366 C482,379.3 483.7,392.7 485,406 C486.3,419.3 487.5,432.7 488,446 C488.5,459.3 488,479.3 488,486" fill="none" stroke="#5d93a6" stroke-width="1" stroke-dasharray="1.5 2" opacity="0.55"/>
<path d="M428,376 C429,382.7 432.3,401 434,416 C435.7,431 437,449.3 438,466 C439,482.7 440,499.3 440,516 C440,532.7 439.2,547.7 438,566 C436.8,584.3 433.8,616 433,626" fill="none" stroke="#0e4350" stroke-width="3.5" opacity="0.7" stroke-linecap="round"/>
<path d="M150,326 C148.8,334.3 144.3,359.3 143,376 C141.7,392.7 141.5,411 142,426 C142.5,441 145.3,459.3 146,466" fill="none" stroke="#0f3b48" stroke-width="5" opacity="0.4" stroke-linecap="round"/>
<path d="M330,206 C329.3,212.7 328.3,231 326,246 C323.7,261 320.3,279.3 316,296 C311.7,312.7 302.7,337.7 300,346" fill="none" stroke="#0c1820" stroke-width="3" opacity="0.6"/>
</g>
<path d="M141,478 Q142,493 143,508 Q144,493 145,478Z" fill="#17465a"/>
<path d="M151,466 Q153.8,491.5 156.5,517 Q157.2,491.5 158,466Z" fill="#0a1a22"/>
<path d="M160.3,466 Q161.2,513 162,560 Q162.8,513 163.5,466Z" fill="#0c2a36"/>
<path d="M166,474 Q167.5,485.5 169,497 Q169.5,485.5 170,474Z" fill="#0c222c"/>
<path d="M177,449 Q193.5,484.8 210,520.5 Q196.5,484.8 183,447Z" fill="#0e303b"/>
<path d="M198,464 Q204.5,477 211,490 Q205.5,477 200,462Z" fill="#123642" opacity="0.8"/>
<path d="M226,526 Q227.8,556.5 217.5,587 Q230.8,556.5 232,554Z" fill="#07090d"/>
<path d="M426,554 Q422.8,592 417.5,630 Q424.5,592 429.5,556Z" fill="#0e333c"/>
<path d="M226,204 C228.3,202.3 236,196.7 240,194 C244,191.3 247.2,189.6 250,188 C252.8,186.4 255.8,185.1 257,184.5" fill="none" stroke="#141c25" stroke-width="2.2"/>
<path d="M266,180.5 C268.3,180.2 275,178.3 280,178.5 C285,178.7 291,179.6 296,181.5 C301,183.4 305.7,186.8 310,190 C314.3,193.2 319.2,198.5 322,201 C324.8,203.5 326.2,204.3 327,205" fill="none" stroke="#08080b" stroke-width="3.2"/>
<path d="M238,202 C240.7,200.3 248.3,194.6 254,192 C259.7,189.4 264.8,187.7 272,186.5 C279.2,185.3 292.8,185.2 297,185" fill="none" stroke="#121a22" stroke-width="2.6"/>
<path d="M326,205 C328.7,204.2 336,201.2 342,200 C348,198.8 354.8,197.8 362,197.5 C369.2,197.2 381.2,198.3 385,198.5" fill="none" stroke="#08080b" stroke-width="3.5"/>
<line x1="319.9" y1="537" x2="319.4" y2="664" stroke="#34d0fb" stroke-width="1.5"/>
</svg></div>
<!-- right panel -->
<div class="abs" style="left:670px;top:73px;width:3px;height:665px;background:#fafaf9"></div>
<div class="abs" id="pane" style="left:673px;top:71px;width:198px;height:667px;border:1px solid #b3aea9;border-right-color:#9a958f;border-bottom:none;box-sizing:border-box;background:#fff"></div>
<div class="abs" id="dlg" style="left:677px;top:75px;width:192px;height:663px;background:#f0eeec"></div>
<div class="abs tab" style="left:675px;width:42px"><span class="t">Model</span></div>
<div class="abs tab" style="left:718px;width:44px"><span class="t">Groups</span></div>
<div class="abs tab" style="left:818px;width:39px"><span class="t">Joints</span></div>
<div class="abs tab" style="left:761px;top:51px;width:58px;height:21px;background:#fff;line-height:19px;border-color:#cfccc9"><span class="t">Materials</span></div>
<div class="abs" id="list" style="left:678px;top:75px;width:189px;height:149px;border:1px solid #7d7a78;box-sizing:border-box;background:#fff;box-shadow:inset 1px 1px 0 #c8c6c4"></div>
<div class="abs" style="left:680px;top:78px;width:184px;height:13px;background:#3592e8;color:#d8f4ff;font-size:11.5px;line-height:13px;padding-left:2px;box-sizing:border-box"><span class="tl">Material01</span></div>
<div class="abs grp" style="left:678px;top:237px;width:184px;height:253px"></div>
<div class="abs" style="left:684px;top:231px;width:42px;height:12px;background:#f0eeec;font-size:11.5px;line-height:12px;padding-left:2px;box-sizing:border-box"><span class="tl">Material</span></div>
<div class="abs" style="left:719px;top:245px;width:100px;height:100px;background:#45342b"></div>
<div class="abs btn" style="left:688px;top:361px;width:78px"><span class="t">Ambient</span></div>
<div class="abs btn" style="left:773px;top:361px;width:78px"><span class="t">Diffuse</span></div>
<div class="abs btn" style="left:688px;top:381px;width:78px"><span class="t">Specular</span></div>
<div class="abs btn" style="left:773px;top:381px;width:78px"><span class="t">Emissive</span></div>
<div class="abs" style="left:695px;top:404px;width:66px;height:3px;border:1px solid #d0cdca;box-sizing:border-box;background:#e8e6e4"></div>
<div class="abs" style="left:777px;top:404px;width:67px;height:3px;border:1px solid #d0cdca;box-sizing:border-box;background:#e8e6e4"></div>
<div class="abs" style="left:692px;top:402px;width:6px;height:8px;border:1px solid #8a8784;box-sizing:border-box;background:#f4f4f4;border-radius:0 0 3px 3px"></div>
<div class="abs" style="left:839px;top:402px;width:6px;height:8px;border:1px solid #8a8784;box-sizing:border-box;background:#f4f4f4;border-radius:0 0 3px 3px"></div>
<div class="abs" style="left:695px;top:414px;width:1px;height:3px;background:#b8b5b2"></div>
<div class="abs" style="left:758px;top:414px;width:1px;height:3px;background:#b8b5b2"></div>
<div class="abs" style="left:780px;top:414px;width:1px;height:3px;background:#b8b5b2"></div>
<div class="abs" style="left:843px;top:414px;width:1px;height:3px;background:#b8b5b2"></div>
<div class="abs btn" style="left:688px;top:421px;width:118px"><span class="t">GUIDE&nbsp; .psd</span></div>
<div class="abs btn" style="left:813px;top:421px;width:38px"><span class="t">None</span></div>
<div class="abs btn" style="left:688px;top:441px;width:118px"><span class="t">&lt;none&gt;</span></div>
<div class="abs btn" style="left:813px;top:441px;width:38px"><span class="t">None</span></div>
<div class="abs btn" style="left:687px;top:460px;width:165px;height:21px;text-align:left;padding-left:4px;line-height:20px"><span class="tl">Default</span><svg class="abs" style="right:4px;top:6px" width="9" height="7" viewBox="0 0 9 7"><path d="M1,1 L4.5,5 L8,1" fill="none" stroke="#4a4540" stroke-width="2.1"/></svg></div>
<div class="abs grp" style="left:678px;top:496px;width:184px;height:99px"></div>
<div class="abs btn" style="left:688px;top:506px;width:78px"><span class="t">New</span></div>
<div class="abs btn" style="left:773px;top:506px;width:78px"><span class="t">Delete</span></div>
<div class="abs btn" style="left:688px;top:526px;width:78px"><span class="t">Rename</span></div>
<div class="abs" style="left:772px;top:525px;width:80px;height:18px;border:1px solid #aaa6a3;background:#fff;box-sizing:border-box;font-size:11.5px;line-height:17px;padding-left:3px"><span class="tl">Material01</span></div>
<div class="abs btn" style="left:688px;top:546px;width:78px"><span class="t">Assign</span></div>
<div class="abs btn" style="left:773px;top:546px;width:78px"><span class="t">Select By</span></div>
<div class="abs btn" style="left:688px;top:566px;width:78px"><span class="t">Comment</span></div>
</body></html>
